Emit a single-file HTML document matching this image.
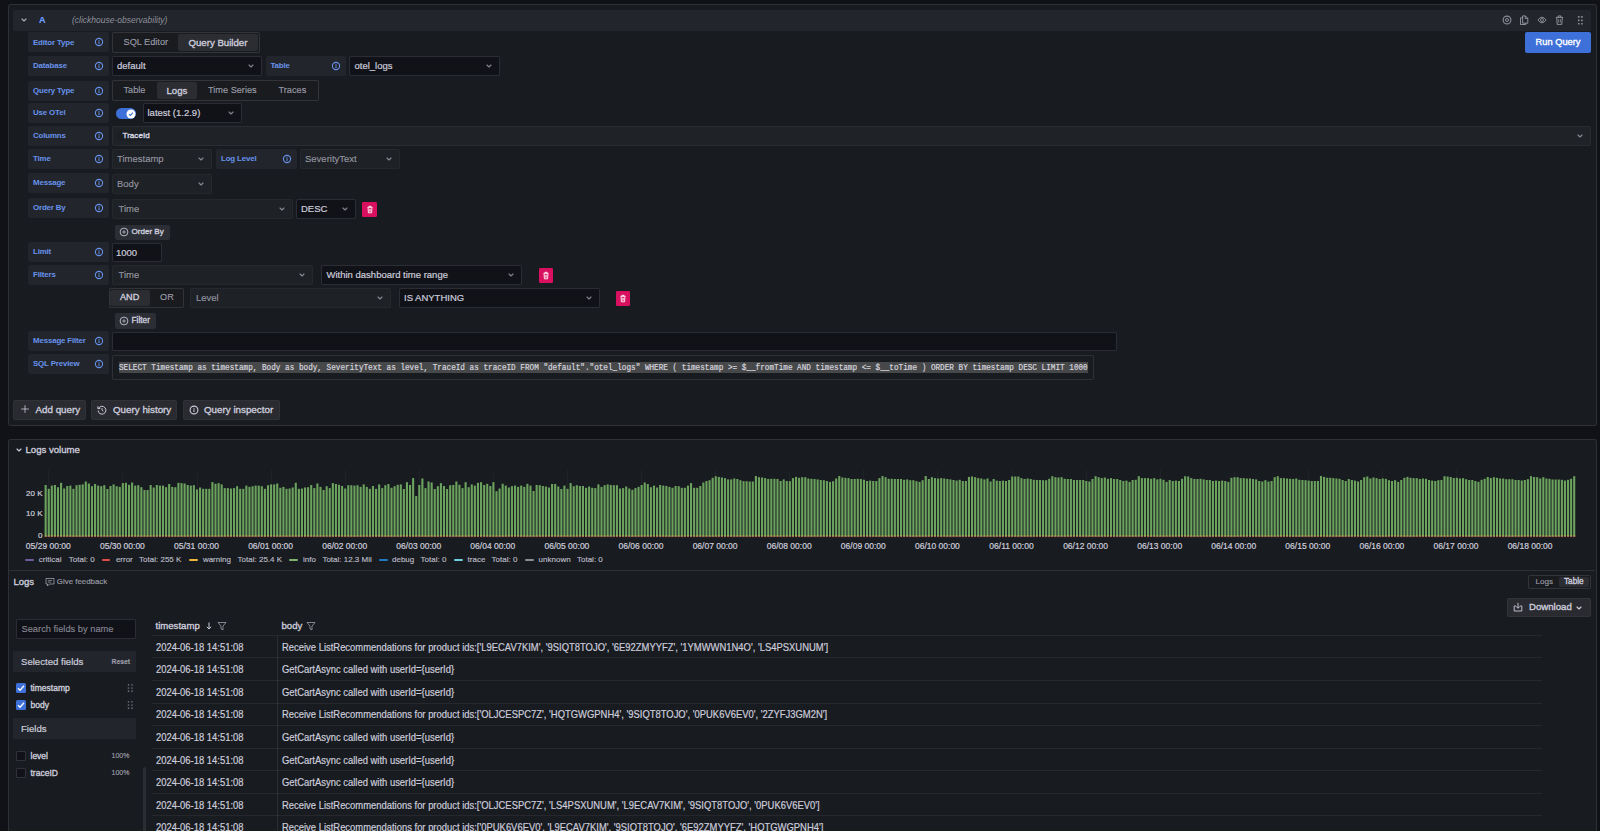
<!DOCTYPE html><html><head><meta charset="utf-8"><style>
html,body{margin:0;padding:0;}
body{width:1600px;height:831px;overflow:hidden;background:#111217;position:relative;font-family:"Liberation Sans",sans-serif;color:#ccccdc;}
.a{position:absolute;}
div.a, span.a{white-space:nowrap;-webkit-text-stroke:0.2px currentColor;}
.sx{transform-origin:0 50%;}
.lbl{color:#6893ec;font-size:7.9px;font-weight:700;letter-spacing:-0.15px;-webkit-text-stroke:0 !important;}
.ns{-webkit-text-stroke:0 !important;}
.val{font-size:9.5px;}
svg.a{overflow:visible;}

</style></head><body>
<div class="a" style="left:8px;top:4px;width:1589px;height:422px;background:#181b1f;border:1px solid rgba(204,204,220,0.12);border-radius:3px;box-sizing:border-box;"></div>
<div class="a" style="left:13px;top:10px;width:1578px;height:20.5px;background:#22252b;border-radius:2px;"></div>
<svg class="a" style="left:19.5px;top:16.5px" width="8" height="6" viewBox="0 0 8 6"><path d="M2 2 L4 4 L6 2" fill="none" stroke="rgba(204,204,220,0.8)" stroke-width="1.15" stroke-linecap="round" stroke-linejoin="round"/></svg>
<div class="a" style="left:39px;top:10px;height:20px;line-height:20px;color:#6e9fff;font-weight:700;font-size:9px">A</div>
<div class="a ns" style="left:72px;top:10px;height:20px;line-height:20px;color:rgba(204,204,220,0.65);font-style:italic;font-size:8.5px">(clickhouse-observability)</div>
<svg class="a" style="left:1501.6px;top:14.7px" width="10" height="10" viewBox="0 0 10 10"><circle cx="5" cy="5" r="3.9" fill="none" stroke="rgba(204,204,220,0.62)" stroke-width="1.1"/><circle cx="5" cy="5" r="1.5" fill="none" stroke="rgba(204,204,220,0.62)" stroke-width="1"/></svg>
<svg class="a" style="left:1519px;top:15px" width="10" height="10" viewBox="0 0 10 10"><path d="M3.6 0.9 H6.4 L8.8 3.3 V8.2 H3.6 Z" fill="none" stroke="rgba(204,204,220,0.62)" stroke-width="1" stroke-linejoin="round"/><path d="M6.2 1 V3.5 H8.7" fill="none" stroke="rgba(204,204,220,0.62)" stroke-width="0.9"/><path d="M3.4 2.8 H1.5 V9.5 H6.8 V8.4" fill="none" stroke="rgba(204,204,220,0.62)" stroke-width="1" stroke-linejoin="round"/></svg>
<svg class="a" style="left:1536.8px;top:14.7px" width="10" height="10" viewBox="0 0 10 10"><path d="M0.9 5 Q5 -0.6 9.1 5 Q5 10.6 0.9 5 Z" fill="none" stroke="rgba(204,204,220,0.62)" stroke-width="1"/><circle cx="5" cy="5" r="1.5" fill="none" stroke="rgba(204,204,220,0.62)" stroke-width="0.9"/></svg>
<svg class="a" style="left:1554.6px;top:14.8px" width="9" height="10" viewBox="0 0 9 10"><path d="M0.9 2.4 H8.1 M3.2 2.2 V0.9 H5.8 V2.2 M1.7 2.6 L2.2 9.4 H6.8 L7.3 2.6" fill="none" stroke="rgba(204,204,220,0.62)" stroke-width="1" stroke-linejoin="round"/><path d="M3.6 4.2 V7.6 M5.4 4.2 V7.6" stroke="rgba(204,204,220,0.62)" stroke-width="0.8"/></svg>
<svg class="a" style="left:1577px;top:15px" width="8" height="10" viewBox="0 0 8 10"><rect x="0.9" y="1.0499999999999998" width="1.7" height="1.7" rx="0.3" fill="rgba(204,204,220,0.62)"/><rect x="0.9" y="4.45" width="1.7" height="1.7" rx="0.3" fill="rgba(204,204,220,0.62)"/><rect x="0.9" y="7.9" width="1.7" height="1.7" rx="0.3" fill="rgba(204,204,220,0.62)"/><rect x="4.050000000000001" y="1.0499999999999998" width="1.7" height="1.7" rx="0.3" fill="rgba(204,204,220,0.62)"/><rect x="4.050000000000001" y="4.45" width="1.7" height="1.7" rx="0.3" fill="rgba(204,204,220,0.62)"/><rect x="4.050000000000001" y="7.9" width="1.7" height="1.7" rx="0.3" fill="rgba(204,204,220,0.62)"/></svg>
<div class="a" style="left:1525px;top:32px;width:66px;height:21px;background:#3d71d9;border-radius:2px;"></div>
<div class="a" style="left:1525px;top:32px;width:66px;height:21px;line-height:21px;text-align:center;color:#fff;font-weight:400;-webkit-text-stroke:0.35px currentColor;font-size:9.3px">Run Query</div>
<div class="a" style="left:28px;top:32px;width:81px;height:20px;background:#22252b;border-radius:2px;"></div><div class="a lbl" style="left:33px;top:33.0px;height:20px;line-height:20px">Editor Type</div><svg class="a" style="left:93.7px;top:37.0px" width="10" height="10" viewBox="0 0 10 10"><circle cx="5" cy="5" r="3.6" fill="none" stroke="#6893ec" stroke-width="1.1"/><rect x="4.5" y="4.3" width="1" height="2.7" fill="#6893ec"/><rect x="4.5" y="2.9" width="1" height="0.9" fill="#6893ec"/></svg>
<div class="a" style="left:28px;top:56px;width:81px;height:20px;background:#22252b;border-radius:2px;"></div><div class="a lbl" style="left:33px;top:56.2px;height:20px;line-height:20px">Database</div><svg class="a" style="left:93.7px;top:61.0px" width="10" height="10" viewBox="0 0 10 10"><circle cx="5" cy="5" r="3.6" fill="none" stroke="#6893ec" stroke-width="1.1"/><rect x="4.5" y="4.3" width="1" height="2.7" fill="#6893ec"/><rect x="4.5" y="2.9" width="1" height="0.9" fill="#6893ec"/></svg>
<div class="a" style="left:28px;top:81px;width:81px;height:20px;background:#22252b;border-radius:2px;"></div><div class="a lbl" style="left:33px;top:81.2px;height:20px;line-height:20px">Query Type</div><svg class="a" style="left:93.7px;top:86.0px" width="10" height="10" viewBox="0 0 10 10"><circle cx="5" cy="5" r="3.6" fill="none" stroke="#6893ec" stroke-width="1.1"/><rect x="4.5" y="4.3" width="1" height="2.7" fill="#6893ec"/><rect x="4.5" y="2.9" width="1" height="0.9" fill="#6893ec"/></svg>
<div class="a" style="left:28px;top:103px;width:81px;height:20px;background:#22252b;border-radius:2px;"></div><div class="a lbl" style="left:33px;top:103.2px;height:20px;line-height:20px">Use OTel</div><svg class="a" style="left:93.7px;top:108.0px" width="10" height="10" viewBox="0 0 10 10"><circle cx="5" cy="5" r="3.6" fill="none" stroke="#6893ec" stroke-width="1.1"/><rect x="4.5" y="4.3" width="1" height="2.7" fill="#6893ec"/><rect x="4.5" y="2.9" width="1" height="0.9" fill="#6893ec"/></svg>
<div class="a" style="left:28px;top:126px;width:81px;height:20px;background:#22252b;border-radius:2px;"></div><div class="a lbl" style="left:33px;top:126.2px;height:20px;line-height:20px">Columns</div><svg class="a" style="left:93.7px;top:131.0px" width="10" height="10" viewBox="0 0 10 10"><circle cx="5" cy="5" r="3.6" fill="none" stroke="#6893ec" stroke-width="1.1"/><rect x="4.5" y="4.3" width="1" height="2.7" fill="#6893ec"/><rect x="4.5" y="2.9" width="1" height="0.9" fill="#6893ec"/></svg>
<div class="a" style="left:28px;top:149px;width:81px;height:20px;background:#22252b;border-radius:2px;"></div><div class="a lbl" style="left:33px;top:149.2px;height:20px;line-height:20px">Time</div><svg class="a" style="left:93.7px;top:154.0px" width="10" height="10" viewBox="0 0 10 10"><circle cx="5" cy="5" r="3.6" fill="none" stroke="#6893ec" stroke-width="1.1"/><rect x="4.5" y="4.3" width="1" height="2.7" fill="#6893ec"/><rect x="4.5" y="2.9" width="1" height="0.9" fill="#6893ec"/></svg>
<div class="a" style="left:28px;top:173px;width:81px;height:20px;background:#22252b;border-radius:2px;"></div><div class="a lbl" style="left:33px;top:173.2px;height:20px;line-height:20px">Message</div><svg class="a" style="left:93.7px;top:178.0px" width="10" height="10" viewBox="0 0 10 10"><circle cx="5" cy="5" r="3.6" fill="none" stroke="#6893ec" stroke-width="1.1"/><rect x="4.5" y="4.3" width="1" height="2.7" fill="#6893ec"/><rect x="4.5" y="2.9" width="1" height="0.9" fill="#6893ec"/></svg>
<div class="a" style="left:28px;top:198px;width:81px;height:20px;background:#22252b;border-radius:2px;"></div><div class="a lbl" style="left:33px;top:198.2px;height:20px;line-height:20px">Order By</div><svg class="a" style="left:93.7px;top:203.0px" width="10" height="10" viewBox="0 0 10 10"><circle cx="5" cy="5" r="3.6" fill="none" stroke="#6893ec" stroke-width="1.1"/><rect x="4.5" y="4.3" width="1" height="2.7" fill="#6893ec"/><rect x="4.5" y="2.9" width="1" height="0.9" fill="#6893ec"/></svg>
<div class="a" style="left:28px;top:242px;width:81px;height:20px;background:#22252b;border-radius:2px;"></div><div class="a lbl" style="left:33px;top:242.2px;height:20px;line-height:20px">Limit</div><svg class="a" style="left:93.7px;top:247.0px" width="10" height="10" viewBox="0 0 10 10"><circle cx="5" cy="5" r="3.6" fill="none" stroke="#6893ec" stroke-width="1.1"/><rect x="4.5" y="4.3" width="1" height="2.7" fill="#6893ec"/><rect x="4.5" y="2.9" width="1" height="0.9" fill="#6893ec"/></svg>
<div class="a" style="left:28px;top:265px;width:81px;height:20px;background:#22252b;border-radius:2px;"></div><div class="a lbl" style="left:33px;top:265.2px;height:20px;line-height:20px">Filters</div><svg class="a" style="left:93.7px;top:270.0px" width="10" height="10" viewBox="0 0 10 10"><circle cx="5" cy="5" r="3.6" fill="none" stroke="#6893ec" stroke-width="1.1"/><rect x="4.5" y="4.3" width="1" height="2.7" fill="#6893ec"/><rect x="4.5" y="2.9" width="1" height="0.9" fill="#6893ec"/></svg>
<div class="a" style="left:28px;top:331px;width:81px;height:20px;background:#22252b;border-radius:2px;"></div><div class="a lbl" style="left:33px;top:331.2px;height:20px;line-height:20px">Message Filter</div><svg class="a" style="left:93.7px;top:336.0px" width="10" height="10" viewBox="0 0 10 10"><circle cx="5" cy="5" r="3.6" fill="none" stroke="#6893ec" stroke-width="1.1"/><rect x="4.5" y="4.3" width="1" height="2.7" fill="#6893ec"/><rect x="4.5" y="2.9" width="1" height="0.9" fill="#6893ec"/></svg>
<div class="a" style="left:28px;top:354px;width:81px;height:20px;background:#22252b;border-radius:2px;"></div><div class="a lbl" style="left:33px;top:354.2px;height:20px;line-height:20px">SQL Preview</div><svg class="a" style="left:93.7px;top:359.0px" width="10" height="10" viewBox="0 0 10 10"><circle cx="5" cy="5" r="3.6" fill="none" stroke="#6893ec" stroke-width="1.1"/><rect x="4.5" y="4.3" width="1" height="2.7" fill="#6893ec"/><rect x="4.5" y="2.9" width="1" height="0.9" fill="#6893ec"/></svg>
<div class="a" style="left:112px;top:32px;width:148px;height:21px;border:1px solid rgba(204,204,220,0.14);border-radius:2px;box-sizing:border-box;background:#191b1f;"></div><div class="a val" style="left:123.5px;top:32.3px;height:21px;line-height:21px;color:rgba(204,204,220,0.65);font-size:9.2px">SQL Editor</div><div class="a" style="left:178px;top:34px;width:80px;height:17px;background:#2b2d32;border-radius:2px;"></div><div class="a val" style="left:188.5px;top:32.3px;height:21px;line-height:21px;color:#ccccdc;font-weight:400;-webkit-text-stroke:0.35px currentColor;font-size:9.65px">Query Builder</div>
<div class="a" style="left:112px;top:55.5px;width:150px;height:20.5px;background:#111217;border:1px solid rgba(204,204,220,0.15);border-radius:2px;box-sizing:border-box;"></div><div class="a val" style="left:117px;top:55.6px;height:20.5px;line-height:20.5px;color:#ccccdc">default</div><svg class="a" style="left:247px;top:62.75px" width="8" height="6" viewBox="0 0 8 6"><path d="M2 2 L4 4 L6 2" fill="none" stroke="rgba(204,204,220,0.6)" stroke-width="1.15" stroke-linecap="round" stroke-linejoin="round"/></svg>
<div class="a" style="left:265.5px;top:55.5px;width:80.5px;height:20.5px;background:#22252b;border-radius:2px;"></div><div class="a lbl" style="left:270.5px;top:55.5px;height:20.5px;line-height:20.5px">Table</div><svg class="a" style="left:330.7px;top:60.75px" width="10" height="10" viewBox="0 0 10 10"><circle cx="5" cy="5" r="3.6" fill="none" stroke="#6893ec" stroke-width="1.1"/><rect x="4.5" y="4.3" width="1" height="2.7" fill="#6893ec"/><rect x="4.5" y="2.9" width="1" height="0.9" fill="#6893ec"/></svg>
<div class="a" style="left:348.5px;top:55.5px;width:151px;height:20.5px;background:#111217;border:1px solid rgba(204,204,220,0.15);border-radius:2px;box-sizing:border-box;"></div><div class="a val" style="left:354.5px;top:55.6px;height:20.5px;line-height:20.5px;color:#ccccdc">otel_logs</div><svg class="a" style="left:485.0px;top:62.75px" width="8" height="6" viewBox="0 0 8 6"><path d="M2 2 L4 4 L6 2" fill="none" stroke="rgba(204,204,220,0.6)" stroke-width="1.15" stroke-linecap="round" stroke-linejoin="round"/></svg>
<div class="a" style="left:112px;top:80px;width:207px;height:21px;border:1px solid rgba(204,204,220,0.14);border-radius:2px;box-sizing:border-box;background:#191b1f;"></div><div class="a val" style="left:123.5px;top:80.3px;height:21px;line-height:21px;color:rgba(204,204,220,0.65);font-size:9.2px">Table</div><div class="a" style="left:156.5px;top:82px;width:40.5px;height:17px;background:#2b2d32;border-radius:2px;"></div><div class="a val" style="left:166.5px;top:80.3px;height:21px;line-height:21px;color:#ccccdc;font-weight:400;-webkit-text-stroke:0.35px currentColor;font-size:9.65px">Logs</div><div class="a val" style="left:208px;top:80.3px;height:21px;line-height:21px;color:rgba(204,204,220,0.65);font-size:9.2px">Time Series</div><div class="a val" style="left:278.5px;top:80.3px;height:21px;line-height:21px;color:rgba(204,204,220,0.65);font-size:9.2px">Traces</div>
<div class="a" style="left:116px;top:108px;width:20px;height:11px;background:#3d71d9;border-radius:6px;"></div>
<svg class="a" style="left:126px;top:108.5px" width="10" height="10" viewBox="0 0 10 10"><circle cx="5" cy="5" r="4.5" fill="#fff"/><path d="M3 5.1 L4.4 6.4 L7 3.7" fill="none" stroke="#3d71d9" stroke-width="1.1"/></svg>
<div class="a" style="left:142.5px;top:103px;width:99px;height:20.3px;background:#111217;border:1px solid rgba(204,204,220,0.15);border-radius:2px;box-sizing:border-box;"></div><div class="a val" style="left:147.5px;top:103.1px;height:20.3px;line-height:20.3px;color:#ccccdc">latest (1.2.9)</div><svg class="a" style="left:227.0px;top:110.15px" width="8" height="6" viewBox="0 0 8 6"><path d="M2 2 L4 4 L6 2" fill="none" stroke="rgba(204,204,220,0.6)" stroke-width="1.15" stroke-linecap="round" stroke-linejoin="round"/></svg>
<div class="a" style="left:112px;top:126px;width:1479px;height:20px;background:#1f2227;border:1px solid rgba(204,204,220,0.06);border-radius:2px;box-sizing:border-box;"></div>
<div class="a" style="left:117px;top:131px;width:34px;height:10px;background:#1c1f24;border-radius:2px;"></div>
<div class="a" style="left:122.5px;top:126px;height:20px;line-height:20px;color:#d8d8e4;font-size:8.1px;font-weight:400;-webkit-text-stroke:0.35px currentColor">TraceId</div>
<svg class="a" style="left:1575.5px;top:133px" width="8" height="6" viewBox="0 0 8 6"><path d="M2 2 L4 4 L6 2" fill="none" stroke="rgba(204,204,220,0.6)" stroke-width="1.15" stroke-linecap="round" stroke-linejoin="round"/></svg>
<div class="a" style="left:112px;top:149px;width:99.5px;height:19.5px;background:#1e2125;border:1px solid rgba(204,204,220,0.045);border-radius:2px;box-sizing:border-box;"></div><div class="a val" style="left:117px;top:149.1px;height:19.5px;line-height:19.5px;color:rgba(204,204,220,0.62)">Timestamp</div><svg class="a" style="left:196.5px;top:155.75px" width="8" height="6" viewBox="0 0 8 6"><path d="M2 2 L4 4 L6 2" fill="none" stroke="rgba(204,204,220,0.6)" stroke-width="1.15" stroke-linecap="round" stroke-linejoin="round"/></svg>
<div class="a" style="left:216px;top:149px;width:81px;height:19.5px;background:#22252b;border-radius:2px;"></div><div class="a lbl" style="left:221px;top:149px;height:19.5px;line-height:19.5px">Log Level</div><svg class="a" style="left:281.7px;top:153.75px" width="10" height="10" viewBox="0 0 10 10"><circle cx="5" cy="5" r="3.6" fill="none" stroke="#6893ec" stroke-width="1.1"/><rect x="4.5" y="4.3" width="1" height="2.7" fill="#6893ec"/><rect x="4.5" y="2.9" width="1" height="0.9" fill="#6893ec"/></svg>
<div class="a" style="left:299.5px;top:149px;width:100.5px;height:19.5px;background:#1e2125;border:1px solid rgba(204,204,220,0.045);border-radius:2px;box-sizing:border-box;"></div><div class="a val" style="left:305.0px;top:149.1px;height:19.5px;line-height:19.5px;color:rgba(204,204,220,0.62)">SeverityText</div><svg class="a" style="left:385.0px;top:155.75px" width="8" height="6" viewBox="0 0 8 6"><path d="M2 2 L4 4 L6 2" fill="none" stroke="rgba(204,204,220,0.6)" stroke-width="1.15" stroke-linecap="round" stroke-linejoin="round"/></svg>
<div class="a" style="left:112px;top:173.5px;width:99.5px;height:20px;background:#1e2125;border:1px solid rgba(204,204,220,0.045);border-radius:2px;box-sizing:border-box;"></div><div class="a val" style="left:117px;top:173.6px;height:20px;line-height:20px;color:rgba(204,204,220,0.62)">Body</div><svg class="a" style="left:196.5px;top:180.5px" width="8" height="6" viewBox="0 0 8 6"><path d="M2 2 L4 4 L6 2" fill="none" stroke="rgba(204,204,220,0.6)" stroke-width="1.15" stroke-linecap="round" stroke-linejoin="round"/></svg>
<div class="a" style="left:112px;top:199px;width:180.5px;height:19.5px;background:#1e2125;border:1px solid rgba(204,204,220,0.045);border-radius:2px;box-sizing:border-box;"></div><div class="a val" style="left:118.5px;top:199.1px;height:19.5px;line-height:19.5px;color:rgba(204,204,220,0.62)">Time</div><svg class="a" style="left:277.5px;top:205.75px" width="8" height="6" viewBox="0 0 8 6"><path d="M2 2 L4 4 L6 2" fill="none" stroke="rgba(204,204,220,0.6)" stroke-width="1.15" stroke-linecap="round" stroke-linejoin="round"/></svg>
<div class="a" style="left:296px;top:199px;width:60px;height:19.5px;background:#111217;border:1px solid rgba(204,204,220,0.15);border-radius:2px;box-sizing:border-box;"></div><div class="a val" style="left:301px;top:199.1px;height:19.5px;line-height:19.5px;color:#ccccdc">DESC</div><svg class="a" style="left:341px;top:205.75px" width="8" height="6" viewBox="0 0 8 6"><path d="M2 2 L4 4 L6 2" fill="none" stroke="rgba(204,204,220,0.6)" stroke-width="1.15" stroke-linecap="round" stroke-linejoin="round"/></svg>
<div class="a" style="left:362px;top:202px;width:15px;height:15px;background:#d8105f;border-radius:1.2px;"></div><svg class="a" style="left:365.5px;top:205.0px" width="8" height="9" viewBox="0 0 8 9"><path d="M1.5 2.3 H6.5 M3 2.3 V1.3 H5 V2.3 M2.1 2.6 L2.4 7.8 H5.6 L5.9 2.6" fill="none" stroke="#fff" stroke-width="0.9" stroke-linejoin="round"/><path d="M3.5 3.8 V6.6 M4.5 3.8 V6.6" stroke="#fff" stroke-width="0.6"/></svg>
<div class="a" style="left:115px;top:225px;width:54.5px;height:14.5px;background:#2b2e34;border-radius:2px;"></div>
<svg class="a" style="left:119.4px;top:226.8px" width="10" height="10" viewBox="0 0 10 10"><circle cx="5" cy="5" r="3.9" fill="none" stroke="#ccccdc" stroke-width="0.85"/><path d="M5 3.2 V6.8 M3.2 5 H6.8" stroke="#ccccdc" stroke-width="0.7"/></svg>
<div class="a" style="left:131.5px;top:225px;height:14.5px;line-height:14.5px;color:#ccccdc;font-size:8.05px;font-weight:400;-webkit-text-stroke:0.35px currentColor">Order By</div>
<div class="a" style="left:112px;top:242.5px;width:49.5px;height:19.5px;background:#111217;border:1px solid rgba(204,204,220,0.15);border-radius:2px;box-sizing:border-box;"></div><div class="a val" style="left:116px;top:242.6px;height:19.5px;line-height:19.5px;color:#ccccdc">1000</div>
<div class="a" style="left:112px;top:265px;width:200.5px;height:19.5px;background:#1e2125;border:1px solid rgba(204,204,220,0.045);border-radius:2px;box-sizing:border-box;"></div><div class="a val" style="left:118.5px;top:265.1px;height:19.5px;line-height:19.5px;color:rgba(204,204,220,0.62)">Time</div><svg class="a" style="left:298.0px;top:271.75px" width="8" height="6" viewBox="0 0 8 6"><path d="M2 2 L4 4 L6 2" fill="none" stroke="rgba(204,204,220,0.6)" stroke-width="1.15" stroke-linecap="round" stroke-linejoin="round"/></svg>
<div class="a" style="left:321px;top:265px;width:200.5px;height:19.5px;background:#111217;border:1px solid rgba(204,204,220,0.15);border-radius:2px;box-sizing:border-box;"></div><div class="a val" style="left:326.5px;top:265.1px;height:19.5px;line-height:19.5px;color:#ccccdc">Within dashboard time range</div><svg class="a" style="left:507.0px;top:271.75px" width="8" height="6" viewBox="0 0 8 6"><path d="M2 2 L4 4 L6 2" fill="none" stroke="rgba(204,204,220,0.6)" stroke-width="1.15" stroke-linecap="round" stroke-linejoin="round"/></svg>
<div class="a" style="left:538.5px;top:268px;width:14.5px;height:14.5px;background:#d8105f;border-radius:1.2px;"></div><svg class="a" style="left:541.75px;top:270.75px" width="8" height="9" viewBox="0 0 8 9"><path d="M1.5 2.3 H6.5 M3 2.3 V1.3 H5 V2.3 M2.1 2.6 L2.4 7.8 H5.6 L5.9 2.6" fill="none" stroke="#fff" stroke-width="0.9" stroke-linejoin="round"/><path d="M3.5 3.8 V6.6 M4.5 3.8 V6.6" stroke="#fff" stroke-width="0.6"/></svg>
<div class="a" style="left:108.5px;top:288px;width:75.5px;height:19.5px;border:1px solid rgba(204,204,220,0.14);border-radius:2px;box-sizing:border-box;background:#191b1f;"></div><div class="a" style="left:110px;top:290px;width:39.5px;height:15.5px;background:#2b2d32;border-radius:2px;"></div><div class="a val" style="left:120px;top:288.3px;height:19.5px;line-height:19.5px;color:#ccccdc;font-weight:400;-webkit-text-stroke:0.35px currentColor;font-size:9.1px">AND</div><div class="a val" style="left:160px;top:288.3px;height:19.5px;line-height:19.5px;color:rgba(204,204,220,0.65);font-size:9.2px">OR</div>
<div class="a" style="left:189.5px;top:288px;width:201px;height:19.5px;background:#1e2125;border:1px solid rgba(204,204,220,0.045);border-radius:2px;box-sizing:border-box;"></div><div class="a val" style="left:196.0px;top:288.1px;height:19.5px;line-height:19.5px;color:rgba(204,204,220,0.62)">Level</div><svg class="a" style="left:375.5px;top:294.75px" width="8" height="6" viewBox="0 0 8 6"><path d="M2 2 L4 4 L6 2" fill="none" stroke="rgba(204,204,220,0.6)" stroke-width="1.15" stroke-linecap="round" stroke-linejoin="round"/></svg>
<div class="a" style="left:399px;top:288px;width:200.5px;height:19.5px;background:#111217;border:1px solid rgba(204,204,220,0.15);border-radius:2px;box-sizing:border-box;"></div><div class="a val" style="left:404px;top:288.1px;height:19.5px;line-height:19.5px;color:#ccccdc">IS ANYTHING</div><svg class="a" style="left:585.0px;top:294.75px" width="8" height="6" viewBox="0 0 8 6"><path d="M2 2 L4 4 L6 2" fill="none" stroke="rgba(204,204,220,0.6)" stroke-width="1.15" stroke-linecap="round" stroke-linejoin="round"/></svg>
<div class="a" style="left:616px;top:290.5px;width:14px;height:15px;background:#d8105f;border-radius:1.2px;"></div><svg class="a" style="left:619.0px;top:293.5px" width="8" height="9" viewBox="0 0 8 9"><path d="M1.5 2.3 H6.5 M3 2.3 V1.3 H5 V2.3 M2.1 2.6 L2.4 7.8 H5.6 L5.9 2.6" fill="none" stroke="#fff" stroke-width="0.9" stroke-linejoin="round"/><path d="M3.5 3.8 V6.6 M4.5 3.8 V6.6" stroke="#fff" stroke-width="0.6"/></svg>
<div class="a" style="left:115px;top:313px;width:40.5px;height:15.5px;background:#2b2e34;border-radius:2px;"></div>
<svg class="a" style="left:119.4px;top:315.5px" width="10" height="10" viewBox="0 0 10 10"><circle cx="5" cy="5" r="3.9" fill="none" stroke="#ccccdc" stroke-width="0.85"/><path d="M5 3.2 V6.8 M3.2 5 H6.8" stroke="#ccccdc" stroke-width="0.7"/></svg>
<div class="a" style="left:131.5px;top:313px;height:15.5px;line-height:15.5px;color:#ccccdc;font-size:8.3px;font-weight:400;-webkit-text-stroke:0.35px currentColor">Filter</div>
<div class="a" style="left:112px;top:331.5px;width:1005px;height:19.5px;background:#111217;border:1px solid rgba(204,204,220,0.15);border-radius:2px;box-sizing:border-box;"></div>
<div class="a" style="left:112px;top:354.5px;width:982px;height:25px;background:#181b1f;border:1px solid rgba(204,204,220,0.12);border-radius:2px;box-sizing:border-box;"></div>
<div class="a" style="left:118.5px;top:361.5px;height:11px;line-height:11px;background:#474849;color:#d5d5df;font-family:'Liberation Mono',monospace;font-size:8.3px;transform:scaleX(0.9265);transform-origin:0 0">SELECT Timestamp as timestamp, Body as body, SeverityText as level, TraceId as traceID FROM "default"."otel_logs" WHERE ( timestamp &gt;= $__fromTime AND timestamp &lt;= $__toTime ) ORDER BY timestamp DESC LIMIT 1000</div>
<div class="a" style="left:13px;top:399.5px;width:73px;height:20.5px;background:#292b30;border:1px solid rgba(204,204,220,0.05);box-sizing:border-box;border-radius:2px;"></div><svg class="a" style="left:19.5px;top:404.3px" width="10" height="10" viewBox="0 0 10 10"><path d="M5 1.2 V8.8 M1.2 5 H8.8" stroke="#ccccdc" stroke-width="0.8"/></svg><div class="a" style="left:35.5px;top:399.5px;height:20.5px;line-height:20.5px;color:#ccccdc;font-size:9.8px;font-weight:400;-webkit-text-stroke:0.35px currentColor">Add query</div>
<div class="a" style="left:90.5px;top:399.5px;width:86.5px;height:20.5px;background:#292b30;border:1px solid rgba(204,204,220,0.05);box-sizing:border-box;border-radius:2px;"></div><svg class="a" style="left:97px;top:405px" width="10" height="10" viewBox="0 0 10 10"><path d="M1.6 3.3 A3.9 3.9 0 1 1 1.1 5.6" fill="none" stroke="#ccccdc" stroke-width="1"/><path d="M0.9 1.3 V3.6 H3.2" fill="none" stroke="#ccccdc" stroke-width="1"/><path d="M5 3 V5.2 L6.4 6.2" fill="none" stroke="#ccccdc" stroke-width="0.9"/></svg><div class="a" style="left:113px;top:399.5px;height:20.5px;line-height:20.5px;color:#ccccdc;font-size:9.8px;font-weight:400;-webkit-text-stroke:0.35px currentColor">Query history</div>
<div class="a" style="left:183px;top:399.5px;width:97px;height:20.5px;background:#292b30;border:1px solid rgba(204,204,220,0.05);box-sizing:border-box;border-radius:2px;"></div><svg class="a" style="left:188.5px;top:405px" width="10" height="10" viewBox="0 0 10 10"><circle cx="5" cy="5" r="3.9" fill="none" stroke="#ccccdc" stroke-width="1.1"/><rect x="4.5" y="4.3" width="1" height="2.7" fill="#ccccdc"/><rect x="4.5" y="2.9" width="1" height="0.9" fill="#ccccdc"/></svg><div class="a" style="left:204px;top:399.5px;height:20.5px;line-height:20.5px;color:#ccccdc;font-size:9.8px;font-weight:400;-webkit-text-stroke:0.35px currentColor">Query inspector</div>
<div class="a" style="left:8px;top:439px;width:1589px;height:400px;background:#181b1f;border:1px solid rgba(204,204,220,0.12);border-radius:3px;box-sizing:border-box;"></div>
<svg class="a" style="left:14.5px;top:447px" width="8" height="6" viewBox="0 0 8 6"><path d="M2 2 L4 4 L6 2" fill="none" stroke="#ccccdc" stroke-width="1.15" stroke-linecap="round" stroke-linejoin="round"/></svg>
<div class="a" style="left:25.5px;top:444px;height:12px;line-height:12px;color:#ccccdc;font-size:9.6px;font-weight:400;-webkit-text-stroke:0.35px currentColor">Logs volume</div>
<div class="a" style="right:1557.5px;top:487.7px;height:12px;line-height:12px;color:#ccccdc;font-size:8px;">20 K</div>
<div class="a" style="right:1557.5px;top:508.20000000000005px;height:12px;line-height:12px;color:#ccccdc;font-size:8px;">10 K</div>
<div class="a" style="right:1557.5px;top:529.8px;height:12px;line-height:12px;color:#ccccdc;font-size:8px;">0</div>
<div class="a" style="left:48.3px;top:470px;width:1px;height:67px;background:rgba(204,204,220,0.045);"></div>
<div class="a" style="left:122.4px;top:470px;width:1px;height:67px;background:rgba(204,204,220,0.045);"></div>
<div class="a" style="left:196.5px;top:470px;width:1px;height:67px;background:rgba(204,204,220,0.045);"></div>
<div class="a" style="left:270.6px;top:470px;width:1px;height:67px;background:rgba(204,204,220,0.045);"></div>
<div class="a" style="left:344.7px;top:470px;width:1px;height:67px;background:rgba(204,204,220,0.045);"></div>
<div class="a" style="left:418.8px;top:470px;width:1px;height:67px;background:rgba(204,204,220,0.045);"></div>
<div class="a" style="left:492.8px;top:470px;width:1px;height:67px;background:rgba(204,204,220,0.045);"></div>
<div class="a" style="left:566.9px;top:470px;width:1px;height:67px;background:rgba(204,204,220,0.045);"></div>
<div class="a" style="left:641.0px;top:470px;width:1px;height:67px;background:rgba(204,204,220,0.045);"></div>
<div class="a" style="left:715.1px;top:470px;width:1px;height:67px;background:rgba(204,204,220,0.045);"></div>
<div class="a" style="left:789.2px;top:470px;width:1px;height:67px;background:rgba(204,204,220,0.045);"></div>
<div class="a" style="left:863.3px;top:470px;width:1px;height:67px;background:rgba(204,204,220,0.045);"></div>
<div class="a" style="left:937.4px;top:470px;width:1px;height:67px;background:rgba(204,204,220,0.045);"></div>
<div class="a" style="left:1011.5px;top:470px;width:1px;height:67px;background:rgba(204,204,220,0.045);"></div>
<div class="a" style="left:1085.6px;top:470px;width:1px;height:67px;background:rgba(204,204,220,0.045);"></div>
<div class="a" style="left:1159.7px;top:470px;width:1px;height:67px;background:rgba(204,204,220,0.045);"></div>
<div class="a" style="left:1233.7px;top:470px;width:1px;height:67px;background:rgba(204,204,220,0.045);"></div>
<div class="a" style="left:1307.8px;top:470px;width:1px;height:67px;background:rgba(204,204,220,0.045);"></div>
<div class="a" style="left:1381.9px;top:470px;width:1px;height:67px;background:rgba(204,204,220,0.045);"></div>
<div class="a" style="left:1456.0px;top:470px;width:1px;height:67px;background:rgba(204,204,220,0.045);"></div>
<div class="a" style="left:1530.1px;top:470px;width:1px;height:67px;background:rgba(204,204,220,0.045);"></div>
<svg class="a" style="left:0;top:0" width="1600" height="600"><rect x="44.60" y="485.0" width="2.1" height="51.6" fill="#6ba25e"/><rect x="44.60" y="535.6" width="2.1" height="0.9" fill="#eab839"/><rect x="44.60" y="536.5" width="2.1" height="0.6" fill="#b04a70"/><rect x="47.69" y="488.8" width="2.1" height="47.9" fill="#6ba25e"/><rect x="47.69" y="535.6" width="2.1" height="0.9" fill="#eab839"/><rect x="47.69" y="536.5" width="2.1" height="0.6" fill="#b04a70"/><rect x="50.78" y="485.6" width="2.1" height="51.0" fill="#6ba25e"/><rect x="50.78" y="535.6" width="2.1" height="0.9" fill="#eab839"/><rect x="50.78" y="536.5" width="2.1" height="0.6" fill="#b04a70"/><rect x="53.86" y="485.0" width="2.1" height="51.6" fill="#6ba25e"/><rect x="53.86" y="535.6" width="2.1" height="0.9" fill="#eab839"/><rect x="53.86" y="536.5" width="2.1" height="0.6" fill="#b04a70"/><rect x="56.95" y="487.2" width="2.1" height="49.4" fill="#6ba25e"/><rect x="56.95" y="535.6" width="2.1" height="0.9" fill="#eab839"/><rect x="56.95" y="536.5" width="2.1" height="0.6" fill="#b04a70"/><rect x="60.04" y="482.8" width="2.1" height="53.9" fill="#6ba25e"/><rect x="60.04" y="535.6" width="2.1" height="0.9" fill="#eab839"/><rect x="60.04" y="536.5" width="2.1" height="0.6" fill="#b04a70"/><rect x="63.13" y="488.5" width="2.1" height="48.1" fill="#6ba25e"/><rect x="63.13" y="535.6" width="2.1" height="0.9" fill="#eab839"/><rect x="63.13" y="536.5" width="2.1" height="0.6" fill="#b04a70"/><rect x="66.22" y="486.0" width="2.1" height="50.6" fill="#6ba25e"/><rect x="66.22" y="535.6" width="2.1" height="0.9" fill="#eab839"/><rect x="66.22" y="536.5" width="2.1" height="0.6" fill="#b04a70"/><rect x="69.30" y="485.6" width="2.1" height="51.0" fill="#6ba25e"/><rect x="69.30" y="535.6" width="2.1" height="0.9" fill="#eab839"/><rect x="69.30" y="536.5" width="2.1" height="0.6" fill="#b04a70"/><rect x="72.39" y="488.8" width="2.1" height="47.9" fill="#6ba25e"/><rect x="72.39" y="535.6" width="2.1" height="0.9" fill="#eab839"/><rect x="72.39" y="536.5" width="2.1" height="0.6" fill="#b04a70"/><rect x="75.48" y="485.2" width="2.1" height="51.4" fill="#6ba25e"/><rect x="75.48" y="535.6" width="2.1" height="0.9" fill="#eab839"/><rect x="75.48" y="536.5" width="2.1" height="0.6" fill="#b04a70"/><rect x="78.57" y="484.8" width="2.1" height="51.9" fill="#6ba25e"/><rect x="78.57" y="535.6" width="2.1" height="0.9" fill="#eab839"/><rect x="78.57" y="536.5" width="2.1" height="0.6" fill="#b04a70"/><rect x="81.66" y="484.4" width="2.1" height="52.2" fill="#6ba25e"/><rect x="81.66" y="535.6" width="2.1" height="0.9" fill="#eab839"/><rect x="81.66" y="536.5" width="2.1" height="0.6" fill="#b04a70"/><rect x="84.74" y="481.5" width="2.1" height="55.1" fill="#6ba25e"/><rect x="84.74" y="535.6" width="2.1" height="0.9" fill="#eab839"/><rect x="84.74" y="536.5" width="2.1" height="0.6" fill="#b04a70"/><rect x="87.83" y="483.5" width="2.1" height="53.1" fill="#6ba25e"/><rect x="87.83" y="535.6" width="2.1" height="0.9" fill="#eab839"/><rect x="87.83" y="536.5" width="2.1" height="0.6" fill="#b04a70"/><rect x="90.92" y="486.2" width="2.1" height="50.4" fill="#6ba25e"/><rect x="90.92" y="535.6" width="2.1" height="0.9" fill="#eab839"/><rect x="90.92" y="536.5" width="2.1" height="0.6" fill="#b04a70"/><rect x="94.01" y="484.0" width="2.1" height="52.6" fill="#6ba25e"/><rect x="94.01" y="535.6" width="2.1" height="0.9" fill="#eab839"/><rect x="94.01" y="536.5" width="2.1" height="0.6" fill="#b04a70"/><rect x="97.10" y="485.6" width="2.1" height="51.0" fill="#6ba25e"/><rect x="97.10" y="535.6" width="2.1" height="0.9" fill="#eab839"/><rect x="97.10" y="536.5" width="2.1" height="0.6" fill="#b04a70"/><rect x="100.18" y="486.2" width="2.1" height="50.4" fill="#6ba25e"/><rect x="100.18" y="535.6" width="2.1" height="0.9" fill="#eab839"/><rect x="100.18" y="536.5" width="2.1" height="0.6" fill="#b04a70"/><rect x="103.27" y="485.2" width="2.1" height="51.4" fill="#6ba25e"/><rect x="103.27" y="535.6" width="2.1" height="0.9" fill="#eab839"/><rect x="103.27" y="536.5" width="2.1" height="0.6" fill="#b04a70"/><rect x="106.36" y="489.0" width="2.1" height="47.6" fill="#6ba25e"/><rect x="106.36" y="535.6" width="2.1" height="0.9" fill="#eab839"/><rect x="106.36" y="536.5" width="2.1" height="0.6" fill="#b04a70"/><rect x="109.45" y="486.0" width="2.1" height="50.6" fill="#6ba25e"/><rect x="109.45" y="535.6" width="2.1" height="0.9" fill="#eab839"/><rect x="109.45" y="536.5" width="2.1" height="0.6" fill="#b04a70"/><rect x="112.54" y="484.4" width="2.1" height="52.2" fill="#6ba25e"/><rect x="112.54" y="535.6" width="2.1" height="0.9" fill="#eab839"/><rect x="112.54" y="536.5" width="2.1" height="0.6" fill="#b04a70"/><rect x="115.62" y="486.2" width="2.1" height="50.4" fill="#6ba25e"/><rect x="115.62" y="535.6" width="2.1" height="0.9" fill="#eab839"/><rect x="115.62" y="536.5" width="2.1" height="0.6" fill="#b04a70"/><rect x="118.71" y="486.9" width="2.1" height="49.7" fill="#6ba25e"/><rect x="118.71" y="535.6" width="2.1" height="0.9" fill="#eab839"/><rect x="118.71" y="536.5" width="2.1" height="0.6" fill="#b04a70"/><rect x="121.80" y="483.1" width="2.1" height="53.5" fill="#6ba25e"/><rect x="121.80" y="535.6" width="2.1" height="0.9" fill="#eab839"/><rect x="121.80" y="536.5" width="2.1" height="0.6" fill="#b04a70"/><rect x="124.89" y="482.8" width="2.1" height="53.9" fill="#6ba25e"/><rect x="124.89" y="535.6" width="2.1" height="0.9" fill="#eab839"/><rect x="124.89" y="536.5" width="2.1" height="0.6" fill="#b04a70"/><rect x="127.98" y="484.8" width="2.1" height="51.9" fill="#6ba25e"/><rect x="127.98" y="535.6" width="2.1" height="0.9" fill="#eab839"/><rect x="127.98" y="536.5" width="2.1" height="0.6" fill="#b04a70"/><rect x="131.06" y="482.5" width="2.1" height="54.1" fill="#6ba25e"/><rect x="131.06" y="535.6" width="2.1" height="0.9" fill="#eab839"/><rect x="131.06" y="536.5" width="2.1" height="0.6" fill="#b04a70"/><rect x="134.15" y="485.6" width="2.1" height="51.0" fill="#6ba25e"/><rect x="134.15" y="535.6" width="2.1" height="0.9" fill="#eab839"/><rect x="134.15" y="536.5" width="2.1" height="0.6" fill="#b04a70"/><rect x="137.24" y="485.2" width="2.1" height="51.4" fill="#6ba25e"/><rect x="137.24" y="535.6" width="2.1" height="0.9" fill="#eab839"/><rect x="137.24" y="536.5" width="2.1" height="0.6" fill="#b04a70"/><rect x="140.33" y="487.2" width="2.1" height="49.4" fill="#6ba25e"/><rect x="140.33" y="535.6" width="2.1" height="0.9" fill="#eab839"/><rect x="140.33" y="536.5" width="2.1" height="0.6" fill="#b04a70"/><rect x="143.42" y="490.0" width="2.1" height="46.6" fill="#6ba25e"/><rect x="143.42" y="535.6" width="2.1" height="0.9" fill="#eab839"/><rect x="143.42" y="536.5" width="2.1" height="0.6" fill="#b04a70"/><rect x="146.50" y="490.0" width="2.1" height="46.6" fill="#6ba25e"/><rect x="146.50" y="535.6" width="2.1" height="0.9" fill="#eab839"/><rect x="146.50" y="536.5" width="2.1" height="0.6" fill="#b04a70"/><rect x="149.59" y="485.0" width="2.1" height="51.6" fill="#6ba25e"/><rect x="149.59" y="535.6" width="2.1" height="0.9" fill="#eab839"/><rect x="149.59" y="536.5" width="2.1" height="0.6" fill="#b04a70"/><rect x="152.68" y="487.5" width="2.1" height="49.1" fill="#6ba25e"/><rect x="152.68" y="535.6" width="2.1" height="0.9" fill="#eab839"/><rect x="152.68" y="536.5" width="2.1" height="0.6" fill="#b04a70"/><rect x="155.77" y="485.0" width="2.1" height="51.6" fill="#6ba25e"/><rect x="155.77" y="535.6" width="2.1" height="0.9" fill="#eab839"/><rect x="155.77" y="536.5" width="2.1" height="0.6" fill="#b04a70"/><rect x="158.86" y="485.6" width="2.1" height="51.0" fill="#6ba25e"/><rect x="158.86" y="535.6" width="2.1" height="0.9" fill="#eab839"/><rect x="158.86" y="536.5" width="2.1" height="0.6" fill="#b04a70"/><rect x="161.94" y="485.6" width="2.1" height="51.0" fill="#6ba25e"/><rect x="161.94" y="535.6" width="2.1" height="0.9" fill="#eab839"/><rect x="161.94" y="536.5" width="2.1" height="0.6" fill="#b04a70"/><rect x="165.03" y="487.2" width="2.1" height="49.4" fill="#6ba25e"/><rect x="165.03" y="535.6" width="2.1" height="0.9" fill="#eab839"/><rect x="165.03" y="536.5" width="2.1" height="0.6" fill="#b04a70"/><rect x="168.12" y="484.0" width="2.1" height="52.6" fill="#6ba25e"/><rect x="168.12" y="535.6" width="2.1" height="0.9" fill="#eab839"/><rect x="168.12" y="536.5" width="2.1" height="0.6" fill="#b04a70"/><rect x="171.21" y="486.9" width="2.1" height="49.7" fill="#6ba25e"/><rect x="171.21" y="535.6" width="2.1" height="0.9" fill="#eab839"/><rect x="171.21" y="536.5" width="2.1" height="0.6" fill="#b04a70"/><rect x="174.30" y="487.2" width="2.1" height="49.4" fill="#6ba25e"/><rect x="174.30" y="535.6" width="2.1" height="0.9" fill="#eab839"/><rect x="174.30" y="536.5" width="2.1" height="0.6" fill="#b04a70"/><rect x="177.38" y="482.8" width="2.1" height="53.9" fill="#6ba25e"/><rect x="177.38" y="535.6" width="2.1" height="0.9" fill="#eab839"/><rect x="177.38" y="536.5" width="2.1" height="0.6" fill="#b04a70"/><rect x="180.47" y="483.1" width="2.1" height="53.5" fill="#6ba25e"/><rect x="180.47" y="535.6" width="2.1" height="0.9" fill="#eab839"/><rect x="180.47" y="536.5" width="2.1" height="0.6" fill="#b04a70"/><rect x="183.56" y="483.5" width="2.1" height="53.1" fill="#6ba25e"/><rect x="183.56" y="535.6" width="2.1" height="0.9" fill="#eab839"/><rect x="183.56" y="536.5" width="2.1" height="0.6" fill="#b04a70"/><rect x="186.65" y="485.0" width="2.1" height="51.6" fill="#6ba25e"/><rect x="186.65" y="535.6" width="2.1" height="0.9" fill="#eab839"/><rect x="186.65" y="536.5" width="2.1" height="0.6" fill="#b04a70"/><rect x="189.74" y="485.6" width="2.1" height="51.0" fill="#6ba25e"/><rect x="189.74" y="535.6" width="2.1" height="0.9" fill="#eab839"/><rect x="189.74" y="536.5" width="2.1" height="0.6" fill="#b04a70"/><rect x="192.82" y="485.2" width="2.1" height="51.4" fill="#6ba25e"/><rect x="192.82" y="535.6" width="2.1" height="0.9" fill="#eab839"/><rect x="192.82" y="536.5" width="2.1" height="0.6" fill="#b04a70"/><rect x="195.91" y="489.4" width="2.1" height="47.2" fill="#6ba25e"/><rect x="195.91" y="535.6" width="2.1" height="0.9" fill="#eab839"/><rect x="195.91" y="536.5" width="2.1" height="0.6" fill="#b04a70"/><rect x="199.00" y="487.5" width="2.1" height="49.1" fill="#6ba25e"/><rect x="199.00" y="535.6" width="2.1" height="0.9" fill="#eab839"/><rect x="199.00" y="536.5" width="2.1" height="0.6" fill="#b04a70"/><rect x="202.09" y="488.8" width="2.1" height="47.9" fill="#6ba25e"/><rect x="202.09" y="535.6" width="2.1" height="0.9" fill="#eab839"/><rect x="202.09" y="536.5" width="2.1" height="0.6" fill="#b04a70"/><rect x="205.18" y="488.8" width="2.1" height="47.9" fill="#6ba25e"/><rect x="205.18" y="535.6" width="2.1" height="0.9" fill="#eab839"/><rect x="205.18" y="536.5" width="2.1" height="0.6" fill="#b04a70"/><rect x="208.26" y="488.8" width="2.1" height="47.9" fill="#6ba25e"/><rect x="208.26" y="535.6" width="2.1" height="0.9" fill="#eab839"/><rect x="208.26" y="536.5" width="2.1" height="0.6" fill="#b04a70"/><rect x="211.35" y="482.1" width="2.1" height="54.5" fill="#6ba25e"/><rect x="211.35" y="535.6" width="2.1" height="0.9" fill="#eab839"/><rect x="211.35" y="536.5" width="2.1" height="0.6" fill="#b04a70"/><rect x="214.44" y="483.8" width="2.1" height="52.9" fill="#6ba25e"/><rect x="214.44" y="535.6" width="2.1" height="0.9" fill="#eab839"/><rect x="214.44" y="536.5" width="2.1" height="0.6" fill="#b04a70"/><rect x="217.53" y="483.1" width="2.1" height="53.5" fill="#6ba25e"/><rect x="217.53" y="535.6" width="2.1" height="0.9" fill="#eab839"/><rect x="217.53" y="536.5" width="2.1" height="0.6" fill="#b04a70"/><rect x="220.62" y="484.4" width="2.1" height="52.2" fill="#6ba25e"/><rect x="220.62" y="535.6" width="2.1" height="0.9" fill="#eab839"/><rect x="220.62" y="536.5" width="2.1" height="0.6" fill="#b04a70"/><rect x="223.70" y="488.1" width="2.1" height="48.5" fill="#6ba25e"/><rect x="223.70" y="535.6" width="2.1" height="0.9" fill="#eab839"/><rect x="223.70" y="536.5" width="2.1" height="0.6" fill="#b04a70"/><rect x="226.79" y="488.1" width="2.1" height="48.5" fill="#6ba25e"/><rect x="226.79" y="535.6" width="2.1" height="0.9" fill="#eab839"/><rect x="226.79" y="536.5" width="2.1" height="0.6" fill="#b04a70"/><rect x="229.88" y="488.5" width="2.1" height="48.1" fill="#6ba25e"/><rect x="229.88" y="535.6" width="2.1" height="0.9" fill="#eab839"/><rect x="229.88" y="536.5" width="2.1" height="0.6" fill="#b04a70"/><rect x="232.97" y="488.1" width="2.1" height="48.5" fill="#6ba25e"/><rect x="232.97" y="535.6" width="2.1" height="0.9" fill="#eab839"/><rect x="232.97" y="536.5" width="2.1" height="0.6" fill="#b04a70"/><rect x="236.06" y="486.2" width="2.1" height="50.4" fill="#6ba25e"/><rect x="236.06" y="535.6" width="2.1" height="0.9" fill="#eab839"/><rect x="236.06" y="536.5" width="2.1" height="0.6" fill="#b04a70"/><rect x="239.14" y="488.8" width="2.1" height="47.9" fill="#6ba25e"/><rect x="239.14" y="535.6" width="2.1" height="0.9" fill="#eab839"/><rect x="239.14" y="536.5" width="2.1" height="0.6" fill="#b04a70"/><rect x="242.23" y="488.8" width="2.1" height="47.9" fill="#6ba25e"/><rect x="242.23" y="535.6" width="2.1" height="0.9" fill="#eab839"/><rect x="242.23" y="536.5" width="2.1" height="0.6" fill="#b04a70"/><rect x="245.32" y="485.6" width="2.1" height="51.0" fill="#6ba25e"/><rect x="245.32" y="535.6" width="2.1" height="0.9" fill="#eab839"/><rect x="245.32" y="536.5" width="2.1" height="0.6" fill="#b04a70"/><rect x="248.41" y="486.9" width="2.1" height="49.7" fill="#6ba25e"/><rect x="248.41" y="535.6" width="2.1" height="0.9" fill="#eab839"/><rect x="248.41" y="536.5" width="2.1" height="0.6" fill="#b04a70"/><rect x="251.50" y="486.2" width="2.1" height="50.4" fill="#6ba25e"/><rect x="251.50" y="535.6" width="2.1" height="0.9" fill="#eab839"/><rect x="251.50" y="536.5" width="2.1" height="0.6" fill="#b04a70"/><rect x="254.58" y="485.6" width="2.1" height="51.0" fill="#6ba25e"/><rect x="254.58" y="535.6" width="2.1" height="0.9" fill="#eab839"/><rect x="254.58" y="536.5" width="2.1" height="0.6" fill="#b04a70"/><rect x="257.67" y="485.6" width="2.1" height="51.0" fill="#6ba25e"/><rect x="257.67" y="535.6" width="2.1" height="0.9" fill="#eab839"/><rect x="257.67" y="536.5" width="2.1" height="0.6" fill="#b04a70"/><rect x="260.76" y="486.2" width="2.1" height="50.4" fill="#6ba25e"/><rect x="260.76" y="535.6" width="2.1" height="0.9" fill="#eab839"/><rect x="260.76" y="536.5" width="2.1" height="0.6" fill="#b04a70"/><rect x="263.85" y="488.8" width="2.1" height="47.9" fill="#6ba25e"/><rect x="263.85" y="535.6" width="2.1" height="0.9" fill="#eab839"/><rect x="263.85" y="536.5" width="2.1" height="0.6" fill="#b04a70"/><rect x="266.94" y="485.2" width="2.1" height="51.4" fill="#6ba25e"/><rect x="266.94" y="535.6" width="2.1" height="0.9" fill="#eab839"/><rect x="266.94" y="536.5" width="2.1" height="0.6" fill="#b04a70"/><rect x="270.02" y="484.4" width="2.1" height="52.2" fill="#6ba25e"/><rect x="270.02" y="535.6" width="2.1" height="0.9" fill="#eab839"/><rect x="270.02" y="536.5" width="2.1" height="0.6" fill="#b04a70"/><rect x="273.11" y="484.4" width="2.1" height="52.2" fill="#6ba25e"/><rect x="273.11" y="535.6" width="2.1" height="0.9" fill="#eab839"/><rect x="273.11" y="536.5" width="2.1" height="0.6" fill="#b04a70"/><rect x="276.20" y="483.5" width="2.1" height="53.1" fill="#6ba25e"/><rect x="276.20" y="535.6" width="2.1" height="0.9" fill="#eab839"/><rect x="276.20" y="536.5" width="2.1" height="0.6" fill="#b04a70"/><rect x="279.29" y="487.8" width="2.1" height="48.9" fill="#6ba25e"/><rect x="279.29" y="535.6" width="2.1" height="0.9" fill="#eab839"/><rect x="279.29" y="536.5" width="2.1" height="0.6" fill="#b04a70"/><rect x="282.38" y="486.9" width="2.1" height="49.7" fill="#6ba25e"/><rect x="282.38" y="535.6" width="2.1" height="0.9" fill="#eab839"/><rect x="282.38" y="536.5" width="2.1" height="0.6" fill="#b04a70"/><rect x="285.46" y="488.8" width="2.1" height="47.9" fill="#6ba25e"/><rect x="285.46" y="535.6" width="2.1" height="0.9" fill="#eab839"/><rect x="285.46" y="536.5" width="2.1" height="0.6" fill="#b04a70"/><rect x="288.55" y="488.5" width="2.1" height="48.1" fill="#6ba25e"/><rect x="288.55" y="535.6" width="2.1" height="0.9" fill="#eab839"/><rect x="288.55" y="536.5" width="2.1" height="0.6" fill="#b04a70"/><rect x="291.64" y="487.5" width="2.1" height="49.1" fill="#6ba25e"/><rect x="291.64" y="535.6" width="2.1" height="0.9" fill="#eab839"/><rect x="291.64" y="536.5" width="2.1" height="0.6" fill="#b04a70"/><rect x="294.73" y="482.8" width="2.1" height="53.9" fill="#6ba25e"/><rect x="294.73" y="535.6" width="2.1" height="0.9" fill="#eab839"/><rect x="294.73" y="536.5" width="2.1" height="0.6" fill="#b04a70"/><rect x="297.82" y="488.8" width="2.1" height="47.9" fill="#6ba25e"/><rect x="297.82" y="535.6" width="2.1" height="0.9" fill="#eab839"/><rect x="297.82" y="536.5" width="2.1" height="0.6" fill="#b04a70"/><rect x="300.90" y="488.5" width="2.1" height="48.1" fill="#6ba25e"/><rect x="300.90" y="535.6" width="2.1" height="0.9" fill="#eab839"/><rect x="300.90" y="536.5" width="2.1" height="0.6" fill="#b04a70"/><rect x="303.99" y="487.5" width="2.1" height="49.1" fill="#6ba25e"/><rect x="303.99" y="535.6" width="2.1" height="0.9" fill="#eab839"/><rect x="303.99" y="536.5" width="2.1" height="0.6" fill="#b04a70"/><rect x="307.08" y="487.2" width="2.1" height="49.4" fill="#6ba25e"/><rect x="307.08" y="535.6" width="2.1" height="0.9" fill="#eab839"/><rect x="307.08" y="536.5" width="2.1" height="0.6" fill="#b04a70"/><rect x="310.17" y="485.0" width="2.1" height="51.6" fill="#6ba25e"/><rect x="310.17" y="535.6" width="2.1" height="0.9" fill="#eab839"/><rect x="310.17" y="536.5" width="2.1" height="0.6" fill="#b04a70"/><rect x="313.26" y="488.1" width="2.1" height="48.5" fill="#6ba25e"/><rect x="313.26" y="535.6" width="2.1" height="0.9" fill="#eab839"/><rect x="313.26" y="536.5" width="2.1" height="0.6" fill="#b04a70"/><rect x="316.34" y="483.5" width="2.1" height="53.1" fill="#6ba25e"/><rect x="316.34" y="535.6" width="2.1" height="0.9" fill="#eab839"/><rect x="316.34" y="536.5" width="2.1" height="0.6" fill="#b04a70"/><rect x="319.43" y="486.9" width="2.1" height="49.7" fill="#6ba25e"/><rect x="319.43" y="535.6" width="2.1" height="0.9" fill="#eab839"/><rect x="319.43" y="536.5" width="2.1" height="0.6" fill="#b04a70"/><rect x="322.52" y="490.0" width="2.1" height="46.6" fill="#6ba25e"/><rect x="322.52" y="535.6" width="2.1" height="0.9" fill="#eab839"/><rect x="322.52" y="536.5" width="2.1" height="0.6" fill="#b04a70"/><rect x="325.61" y="486.2" width="2.1" height="50.4" fill="#6ba25e"/><rect x="325.61" y="535.6" width="2.1" height="0.9" fill="#eab839"/><rect x="325.61" y="536.5" width="2.1" height="0.6" fill="#b04a70"/><rect x="328.70" y="488.1" width="2.1" height="48.5" fill="#6ba25e"/><rect x="328.70" y="535.6" width="2.1" height="0.9" fill="#eab839"/><rect x="328.70" y="536.5" width="2.1" height="0.6" fill="#b04a70"/><rect x="331.78" y="483.1" width="2.1" height="53.5" fill="#6ba25e"/><rect x="331.78" y="535.6" width="2.1" height="0.9" fill="#eab839"/><rect x="331.78" y="536.5" width="2.1" height="0.6" fill="#b04a70"/><rect x="334.87" y="484.0" width="2.1" height="52.6" fill="#6ba25e"/><rect x="334.87" y="535.6" width="2.1" height="0.9" fill="#eab839"/><rect x="334.87" y="536.5" width="2.1" height="0.6" fill="#b04a70"/><rect x="337.96" y="484.8" width="2.1" height="51.9" fill="#6ba25e"/><rect x="337.96" y="535.6" width="2.1" height="0.9" fill="#eab839"/><rect x="337.96" y="536.5" width="2.1" height="0.6" fill="#b04a70"/><rect x="341.05" y="486.0" width="2.1" height="50.6" fill="#6ba25e"/><rect x="341.05" y="535.6" width="2.1" height="0.9" fill="#eab839"/><rect x="341.05" y="536.5" width="2.1" height="0.6" fill="#b04a70"/><rect x="344.14" y="488.5" width="2.1" height="48.1" fill="#6ba25e"/><rect x="344.14" y="535.6" width="2.1" height="0.9" fill="#eab839"/><rect x="344.14" y="536.5" width="2.1" height="0.6" fill="#b04a70"/><rect x="347.22" y="485.2" width="2.1" height="51.4" fill="#6ba25e"/><rect x="347.22" y="535.6" width="2.1" height="0.9" fill="#eab839"/><rect x="347.22" y="536.5" width="2.1" height="0.6" fill="#b04a70"/><rect x="350.31" y="485.2" width="2.1" height="51.4" fill="#6ba25e"/><rect x="350.31" y="535.6" width="2.1" height="0.9" fill="#eab839"/><rect x="350.31" y="536.5" width="2.1" height="0.6" fill="#b04a70"/><rect x="353.40" y="485.6" width="2.1" height="51.0" fill="#6ba25e"/><rect x="353.40" y="535.6" width="2.1" height="0.9" fill="#eab839"/><rect x="353.40" y="536.5" width="2.1" height="0.6" fill="#b04a70"/><rect x="356.49" y="485.2" width="2.1" height="51.4" fill="#6ba25e"/><rect x="356.49" y="535.6" width="2.1" height="0.9" fill="#eab839"/><rect x="356.49" y="536.5" width="2.1" height="0.6" fill="#b04a70"/><rect x="359.58" y="486.9" width="2.1" height="49.7" fill="#6ba25e"/><rect x="359.58" y="535.6" width="2.1" height="0.9" fill="#eab839"/><rect x="359.58" y="536.5" width="2.1" height="0.6" fill="#b04a70"/><rect x="362.66" y="484.4" width="2.1" height="52.2" fill="#6ba25e"/><rect x="362.66" y="535.6" width="2.1" height="0.9" fill="#eab839"/><rect x="362.66" y="536.5" width="2.1" height="0.6" fill="#b04a70"/><rect x="365.75" y="486.9" width="2.1" height="49.7" fill="#6ba25e"/><rect x="365.75" y="535.6" width="2.1" height="0.9" fill="#eab839"/><rect x="365.75" y="536.5" width="2.1" height="0.6" fill="#b04a70"/><rect x="368.84" y="488.8" width="2.1" height="47.9" fill="#6ba25e"/><rect x="368.84" y="535.6" width="2.1" height="0.9" fill="#eab839"/><rect x="368.84" y="536.5" width="2.1" height="0.6" fill="#b04a70"/><rect x="371.93" y="486.0" width="2.1" height="50.6" fill="#6ba25e"/><rect x="371.93" y="535.6" width="2.1" height="0.9" fill="#eab839"/><rect x="371.93" y="536.5" width="2.1" height="0.6" fill="#b04a70"/><rect x="375.02" y="488.8" width="2.1" height="47.9" fill="#6ba25e"/><rect x="375.02" y="535.6" width="2.1" height="0.9" fill="#eab839"/><rect x="375.02" y="536.5" width="2.1" height="0.6" fill="#b04a70"/><rect x="378.10" y="484.4" width="2.1" height="52.2" fill="#6ba25e"/><rect x="378.10" y="535.6" width="2.1" height="0.9" fill="#eab839"/><rect x="378.10" y="536.5" width="2.1" height="0.6" fill="#b04a70"/><rect x="381.19" y="488.1" width="2.1" height="48.5" fill="#6ba25e"/><rect x="381.19" y="535.6" width="2.1" height="0.9" fill="#eab839"/><rect x="381.19" y="536.5" width="2.1" height="0.6" fill="#b04a70"/><rect x="384.28" y="485.2" width="2.1" height="51.4" fill="#6ba25e"/><rect x="384.28" y="535.6" width="2.1" height="0.9" fill="#eab839"/><rect x="384.28" y="536.5" width="2.1" height="0.6" fill="#b04a70"/><rect x="387.37" y="484.0" width="2.1" height="52.6" fill="#6ba25e"/><rect x="387.37" y="535.6" width="2.1" height="0.9" fill="#eab839"/><rect x="387.37" y="536.5" width="2.1" height="0.6" fill="#b04a70"/><rect x="390.46" y="487.8" width="2.1" height="48.9" fill="#6ba25e"/><rect x="390.46" y="535.6" width="2.1" height="0.9" fill="#eab839"/><rect x="390.46" y="536.5" width="2.1" height="0.6" fill="#b04a70"/><rect x="393.54" y="486.2" width="2.1" height="50.4" fill="#6ba25e"/><rect x="393.54" y="535.6" width="2.1" height="0.9" fill="#eab839"/><rect x="393.54" y="536.5" width="2.1" height="0.6" fill="#b04a70"/><rect x="396.63" y="484.8" width="2.1" height="51.9" fill="#6ba25e"/><rect x="396.63" y="535.6" width="2.1" height="0.9" fill="#eab839"/><rect x="396.63" y="536.5" width="2.1" height="0.6" fill="#b04a70"/><rect x="399.72" y="484.4" width="2.1" height="52.2" fill="#6ba25e"/><rect x="399.72" y="535.6" width="2.1" height="0.9" fill="#eab839"/><rect x="399.72" y="536.5" width="2.1" height="0.6" fill="#b04a70"/><rect x="402.81" y="489.0" width="2.1" height="47.6" fill="#6ba25e"/><rect x="402.81" y="535.6" width="2.1" height="0.9" fill="#eab839"/><rect x="402.81" y="536.5" width="2.1" height="0.6" fill="#b04a70"/><rect x="405.90" y="482.2" width="2.1" height="54.4" fill="#6ba25e"/><rect x="405.90" y="535.6" width="2.1" height="0.9" fill="#eab839"/><rect x="405.90" y="536.5" width="2.1" height="0.6" fill="#b04a70"/><rect x="408.98" y="485.0" width="2.1" height="51.6" fill="#6ba25e"/><rect x="408.98" y="535.6" width="2.1" height="0.9" fill="#eab839"/><rect x="408.98" y="536.5" width="2.1" height="0.6" fill="#b04a70"/><rect x="412.07" y="478.1" width="2.1" height="58.5" fill="#6ba25e"/><rect x="412.07" y="535.6" width="2.1" height="0.9" fill="#eab839"/><rect x="412.07" y="536.5" width="2.1" height="0.6" fill="#b04a70"/><rect x="415.16" y="496.0" width="2.1" height="40.6" fill="#6ba25e"/><rect x="415.16" y="535.6" width="2.1" height="0.9" fill="#eab839"/><rect x="415.16" y="536.5" width="2.1" height="0.6" fill="#b04a70"/><rect x="418.25" y="485.0" width="2.1" height="51.6" fill="#6ba25e"/><rect x="418.25" y="535.6" width="2.1" height="0.9" fill="#eab839"/><rect x="418.25" y="536.5" width="2.1" height="0.6" fill="#b04a70"/><rect x="421.34" y="478.5" width="2.1" height="58.1" fill="#6ba25e"/><rect x="421.34" y="535.6" width="2.1" height="0.9" fill="#eab839"/><rect x="421.34" y="536.5" width="2.1" height="0.6" fill="#b04a70"/><rect x="424.42" y="488.1" width="2.1" height="48.5" fill="#6ba25e"/><rect x="424.42" y="535.6" width="2.1" height="0.9" fill="#eab839"/><rect x="424.42" y="536.5" width="2.1" height="0.6" fill="#b04a70"/><rect x="427.51" y="481.5" width="2.1" height="55.1" fill="#6ba25e"/><rect x="427.51" y="535.6" width="2.1" height="0.9" fill="#eab839"/><rect x="427.51" y="536.5" width="2.1" height="0.6" fill="#b04a70"/><rect x="430.60" y="482.5" width="2.1" height="54.1" fill="#6ba25e"/><rect x="430.60" y="535.6" width="2.1" height="0.9" fill="#eab839"/><rect x="430.60" y="536.5" width="2.1" height="0.6" fill="#b04a70"/><rect x="433.69" y="489.0" width="2.1" height="47.6" fill="#6ba25e"/><rect x="433.69" y="535.6" width="2.1" height="0.9" fill="#eab839"/><rect x="433.69" y="536.5" width="2.1" height="0.6" fill="#b04a70"/><rect x="436.78" y="486.2" width="2.1" height="50.4" fill="#6ba25e"/><rect x="436.78" y="535.6" width="2.1" height="0.9" fill="#eab839"/><rect x="436.78" y="536.5" width="2.1" height="0.6" fill="#b04a70"/><rect x="439.86" y="483.1" width="2.1" height="53.5" fill="#6ba25e"/><rect x="439.86" y="535.6" width="2.1" height="0.9" fill="#eab839"/><rect x="439.86" y="536.5" width="2.1" height="0.6" fill="#b04a70"/><rect x="442.95" y="486.0" width="2.1" height="50.6" fill="#6ba25e"/><rect x="442.95" y="535.6" width="2.1" height="0.9" fill="#eab839"/><rect x="442.95" y="536.5" width="2.1" height="0.6" fill="#b04a70"/><rect x="446.04" y="489.0" width="2.1" height="47.6" fill="#6ba25e"/><rect x="446.04" y="535.6" width="2.1" height="0.9" fill="#eab839"/><rect x="446.04" y="536.5" width="2.1" height="0.6" fill="#b04a70"/><rect x="449.13" y="485.2" width="2.1" height="51.4" fill="#6ba25e"/><rect x="449.13" y="535.6" width="2.1" height="0.9" fill="#eab839"/><rect x="449.13" y="536.5" width="2.1" height="0.6" fill="#b04a70"/><rect x="452.22" y="485.0" width="2.1" height="51.6" fill="#6ba25e"/><rect x="452.22" y="535.6" width="2.1" height="0.9" fill="#eab839"/><rect x="452.22" y="536.5" width="2.1" height="0.6" fill="#b04a70"/><rect x="455.30" y="481.5" width="2.1" height="55.1" fill="#6ba25e"/><rect x="455.30" y="535.6" width="2.1" height="0.9" fill="#eab839"/><rect x="455.30" y="536.5" width="2.1" height="0.6" fill="#b04a70"/><rect x="458.39" y="484.8" width="2.1" height="51.9" fill="#6ba25e"/><rect x="458.39" y="535.6" width="2.1" height="0.9" fill="#eab839"/><rect x="458.39" y="536.5" width="2.1" height="0.6" fill="#b04a70"/><rect x="461.48" y="488.1" width="2.1" height="48.5" fill="#6ba25e"/><rect x="461.48" y="535.6" width="2.1" height="0.9" fill="#eab839"/><rect x="461.48" y="536.5" width="2.1" height="0.6" fill="#b04a70"/><rect x="464.57" y="482.2" width="2.1" height="54.4" fill="#6ba25e"/><rect x="464.57" y="535.6" width="2.1" height="0.9" fill="#eab839"/><rect x="464.57" y="536.5" width="2.1" height="0.6" fill="#b04a70"/><rect x="467.66" y="487.2" width="2.1" height="49.4" fill="#6ba25e"/><rect x="467.66" y="535.6" width="2.1" height="0.9" fill="#eab839"/><rect x="467.66" y="536.5" width="2.1" height="0.6" fill="#b04a70"/><rect x="470.74" y="484.4" width="2.1" height="52.2" fill="#6ba25e"/><rect x="470.74" y="535.6" width="2.1" height="0.9" fill="#eab839"/><rect x="470.74" y="536.5" width="2.1" height="0.6" fill="#b04a70"/><rect x="473.83" y="485.6" width="2.1" height="51.0" fill="#6ba25e"/><rect x="473.83" y="535.6" width="2.1" height="0.9" fill="#eab839"/><rect x="473.83" y="536.5" width="2.1" height="0.6" fill="#b04a70"/><rect x="476.92" y="482.8" width="2.1" height="53.9" fill="#6ba25e"/><rect x="476.92" y="535.6" width="2.1" height="0.9" fill="#eab839"/><rect x="476.92" y="536.5" width="2.1" height="0.6" fill="#b04a70"/><rect x="480.01" y="482.2" width="2.1" height="54.4" fill="#6ba25e"/><rect x="480.01" y="535.6" width="2.1" height="0.9" fill="#eab839"/><rect x="480.01" y="536.5" width="2.1" height="0.6" fill="#b04a70"/><rect x="483.10" y="485.0" width="2.1" height="51.6" fill="#6ba25e"/><rect x="483.10" y="535.6" width="2.1" height="0.9" fill="#eab839"/><rect x="483.10" y="536.5" width="2.1" height="0.6" fill="#b04a70"/><rect x="486.18" y="483.8" width="2.1" height="52.9" fill="#6ba25e"/><rect x="486.18" y="535.6" width="2.1" height="0.9" fill="#eab839"/><rect x="486.18" y="536.5" width="2.1" height="0.6" fill="#b04a70"/><rect x="489.27" y="486.0" width="2.1" height="50.6" fill="#6ba25e"/><rect x="489.27" y="535.6" width="2.1" height="0.9" fill="#eab839"/><rect x="489.27" y="536.5" width="2.1" height="0.6" fill="#b04a70"/><rect x="492.36" y="482.2" width="2.1" height="54.4" fill="#6ba25e"/><rect x="492.36" y="535.6" width="2.1" height="0.9" fill="#eab839"/><rect x="492.36" y="536.5" width="2.1" height="0.6" fill="#b04a70"/><rect x="495.45" y="491.2" width="2.1" height="45.4" fill="#6ba25e"/><rect x="495.45" y="535.6" width="2.1" height="0.9" fill="#eab839"/><rect x="495.45" y="536.5" width="2.1" height="0.6" fill="#b04a70"/><rect x="498.54" y="488.5" width="2.1" height="48.1" fill="#6ba25e"/><rect x="498.54" y="535.6" width="2.1" height="0.9" fill="#eab839"/><rect x="498.54" y="536.5" width="2.1" height="0.6" fill="#b04a70"/><rect x="501.62" y="483.8" width="2.1" height="52.9" fill="#6ba25e"/><rect x="501.62" y="535.6" width="2.1" height="0.9" fill="#eab839"/><rect x="501.62" y="536.5" width="2.1" height="0.6" fill="#b04a70"/><rect x="504.71" y="485.6" width="2.1" height="51.0" fill="#6ba25e"/><rect x="504.71" y="535.6" width="2.1" height="0.9" fill="#eab839"/><rect x="504.71" y="536.5" width="2.1" height="0.6" fill="#b04a70"/><rect x="507.80" y="487.5" width="2.1" height="49.1" fill="#6ba25e"/><rect x="507.80" y="535.6" width="2.1" height="0.9" fill="#eab839"/><rect x="507.80" y="536.5" width="2.1" height="0.6" fill="#b04a70"/><rect x="510.89" y="486.2" width="2.1" height="50.4" fill="#6ba25e"/><rect x="510.89" y="535.6" width="2.1" height="0.9" fill="#eab839"/><rect x="510.89" y="536.5" width="2.1" height="0.6" fill="#b04a70"/><rect x="513.98" y="485.6" width="2.1" height="51.0" fill="#6ba25e"/><rect x="513.98" y="535.6" width="2.1" height="0.9" fill="#eab839"/><rect x="513.98" y="536.5" width="2.1" height="0.6" fill="#b04a70"/><rect x="517.06" y="486.9" width="2.1" height="49.7" fill="#6ba25e"/><rect x="517.06" y="535.6" width="2.1" height="0.9" fill="#eab839"/><rect x="517.06" y="536.5" width="2.1" height="0.6" fill="#b04a70"/><rect x="520.15" y="485.6" width="2.1" height="51.0" fill="#6ba25e"/><rect x="520.15" y="535.6" width="2.1" height="0.9" fill="#eab839"/><rect x="520.15" y="536.5" width="2.1" height="0.6" fill="#b04a70"/><rect x="523.24" y="486.9" width="2.1" height="49.7" fill="#6ba25e"/><rect x="523.24" y="535.6" width="2.1" height="0.9" fill="#eab839"/><rect x="523.24" y="536.5" width="2.1" height="0.6" fill="#b04a70"/><rect x="526.33" y="483.8" width="2.1" height="52.9" fill="#6ba25e"/><rect x="526.33" y="535.6" width="2.1" height="0.9" fill="#eab839"/><rect x="526.33" y="536.5" width="2.1" height="0.6" fill="#b04a70"/><rect x="529.42" y="485.6" width="2.1" height="51.0" fill="#6ba25e"/><rect x="529.42" y="535.6" width="2.1" height="0.9" fill="#eab839"/><rect x="529.42" y="536.5" width="2.1" height="0.6" fill="#b04a70"/><rect x="532.50" y="491.0" width="2.1" height="45.6" fill="#6ba25e"/><rect x="532.50" y="535.6" width="2.1" height="0.9" fill="#eab839"/><rect x="532.50" y="536.5" width="2.1" height="0.6" fill="#b04a70"/><rect x="535.59" y="485.0" width="2.1" height="51.6" fill="#6ba25e"/><rect x="535.59" y="535.6" width="2.1" height="0.9" fill="#eab839"/><rect x="535.59" y="536.5" width="2.1" height="0.6" fill="#b04a70"/><rect x="538.68" y="485.2" width="2.1" height="51.4" fill="#6ba25e"/><rect x="538.68" y="535.6" width="2.1" height="0.9" fill="#eab839"/><rect x="538.68" y="536.5" width="2.1" height="0.6" fill="#b04a70"/><rect x="541.77" y="486.0" width="2.1" height="50.6" fill="#6ba25e"/><rect x="541.77" y="535.6" width="2.1" height="0.9" fill="#eab839"/><rect x="541.77" y="536.5" width="2.1" height="0.6" fill="#b04a70"/><rect x="544.86" y="486.5" width="2.1" height="50.1" fill="#6ba25e"/><rect x="544.86" y="535.6" width="2.1" height="0.9" fill="#eab839"/><rect x="544.86" y="536.5" width="2.1" height="0.6" fill="#b04a70"/><rect x="547.94" y="487.5" width="2.1" height="49.1" fill="#6ba25e"/><rect x="547.94" y="535.6" width="2.1" height="0.9" fill="#eab839"/><rect x="547.94" y="536.5" width="2.1" height="0.6" fill="#b04a70"/><rect x="551.03" y="484.0" width="2.1" height="52.6" fill="#6ba25e"/><rect x="551.03" y="535.6" width="2.1" height="0.9" fill="#eab839"/><rect x="551.03" y="536.5" width="2.1" height="0.6" fill="#b04a70"/><rect x="554.12" y="484.0" width="2.1" height="52.6" fill="#6ba25e"/><rect x="554.12" y="535.6" width="2.1" height="0.9" fill="#eab839"/><rect x="554.12" y="536.5" width="2.1" height="0.6" fill="#b04a70"/><rect x="557.21" y="486.5" width="2.1" height="50.1" fill="#6ba25e"/><rect x="557.21" y="535.6" width="2.1" height="0.9" fill="#eab839"/><rect x="557.21" y="536.5" width="2.1" height="0.6" fill="#b04a70"/><rect x="560.30" y="489.0" width="2.1" height="47.6" fill="#6ba25e"/><rect x="560.30" y="535.6" width="2.1" height="0.9" fill="#eab839"/><rect x="560.30" y="536.5" width="2.1" height="0.6" fill="#b04a70"/><rect x="563.38" y="485.6" width="2.1" height="51.0" fill="#6ba25e"/><rect x="563.38" y="535.6" width="2.1" height="0.9" fill="#eab839"/><rect x="563.38" y="536.5" width="2.1" height="0.6" fill="#b04a70"/><rect x="566.47" y="488.8" width="2.1" height="47.9" fill="#6ba25e"/><rect x="566.47" y="535.6" width="2.1" height="0.9" fill="#eab839"/><rect x="566.47" y="536.5" width="2.1" height="0.6" fill="#b04a70"/><rect x="569.56" y="483.1" width="2.1" height="53.5" fill="#6ba25e"/><rect x="569.56" y="535.6" width="2.1" height="0.9" fill="#eab839"/><rect x="569.56" y="536.5" width="2.1" height="0.6" fill="#b04a70"/><rect x="572.65" y="486.2" width="2.1" height="50.4" fill="#6ba25e"/><rect x="572.65" y="535.6" width="2.1" height="0.9" fill="#eab839"/><rect x="572.65" y="536.5" width="2.1" height="0.6" fill="#b04a70"/><rect x="575.74" y="485.2" width="2.1" height="51.4" fill="#6ba25e"/><rect x="575.74" y="535.6" width="2.1" height="0.9" fill="#eab839"/><rect x="575.74" y="536.5" width="2.1" height="0.6" fill="#b04a70"/><rect x="578.82" y="486.0" width="2.1" height="50.6" fill="#6ba25e"/><rect x="578.82" y="535.6" width="2.1" height="0.9" fill="#eab839"/><rect x="578.82" y="536.5" width="2.1" height="0.6" fill="#b04a70"/><rect x="581.91" y="486.0" width="2.1" height="50.6" fill="#6ba25e"/><rect x="581.91" y="535.6" width="2.1" height="0.9" fill="#eab839"/><rect x="581.91" y="536.5" width="2.1" height="0.6" fill="#b04a70"/><rect x="585.00" y="487.8" width="2.1" height="48.9" fill="#6ba25e"/><rect x="585.00" y="535.6" width="2.1" height="0.9" fill="#eab839"/><rect x="585.00" y="536.5" width="2.1" height="0.6" fill="#b04a70"/><rect x="588.09" y="486.5" width="2.1" height="50.1" fill="#6ba25e"/><rect x="588.09" y="535.6" width="2.1" height="0.9" fill="#eab839"/><rect x="588.09" y="536.5" width="2.1" height="0.6" fill="#b04a70"/><rect x="591.18" y="487.8" width="2.1" height="48.9" fill="#6ba25e"/><rect x="591.18" y="535.6" width="2.1" height="0.9" fill="#eab839"/><rect x="591.18" y="536.5" width="2.1" height="0.6" fill="#b04a70"/><rect x="594.26" y="488.1" width="2.1" height="48.5" fill="#6ba25e"/><rect x="594.26" y="535.6" width="2.1" height="0.9" fill="#eab839"/><rect x="594.26" y="536.5" width="2.1" height="0.6" fill="#b04a70"/><rect x="597.35" y="484.4" width="2.1" height="52.2" fill="#6ba25e"/><rect x="597.35" y="535.6" width="2.1" height="0.9" fill="#eab839"/><rect x="597.35" y="536.5" width="2.1" height="0.6" fill="#b04a70"/><rect x="600.44" y="486.9" width="2.1" height="49.7" fill="#6ba25e"/><rect x="600.44" y="535.6" width="2.1" height="0.9" fill="#eab839"/><rect x="600.44" y="536.5" width="2.1" height="0.6" fill="#b04a70"/><rect x="603.53" y="485.2" width="2.1" height="51.4" fill="#6ba25e"/><rect x="603.53" y="535.6" width="2.1" height="0.9" fill="#eab839"/><rect x="603.53" y="536.5" width="2.1" height="0.6" fill="#b04a70"/><rect x="606.62" y="484.4" width="2.1" height="52.2" fill="#6ba25e"/><rect x="606.62" y="535.6" width="2.1" height="0.9" fill="#eab839"/><rect x="606.62" y="536.5" width="2.1" height="0.6" fill="#b04a70"/><rect x="609.70" y="485.0" width="2.1" height="51.6" fill="#6ba25e"/><rect x="609.70" y="535.6" width="2.1" height="0.9" fill="#eab839"/><rect x="609.70" y="536.5" width="2.1" height="0.6" fill="#b04a70"/><rect x="612.79" y="485.2" width="2.1" height="51.4" fill="#6ba25e"/><rect x="612.79" y="535.6" width="2.1" height="0.9" fill="#eab839"/><rect x="612.79" y="536.5" width="2.1" height="0.6" fill="#b04a70"/><rect x="615.88" y="485.2" width="2.1" height="51.4" fill="#6ba25e"/><rect x="615.88" y="535.6" width="2.1" height="0.9" fill="#eab839"/><rect x="615.88" y="536.5" width="2.1" height="0.6" fill="#b04a70"/><rect x="618.97" y="488.5" width="2.1" height="48.1" fill="#6ba25e"/><rect x="618.97" y="535.6" width="2.1" height="0.9" fill="#eab839"/><rect x="618.97" y="536.5" width="2.1" height="0.6" fill="#b04a70"/><rect x="622.06" y="488.1" width="2.1" height="48.5" fill="#6ba25e"/><rect x="622.06" y="535.6" width="2.1" height="0.9" fill="#eab839"/><rect x="622.06" y="536.5" width="2.1" height="0.6" fill="#b04a70"/><rect x="625.14" y="486.5" width="2.1" height="50.1" fill="#6ba25e"/><rect x="625.14" y="535.6" width="2.1" height="0.9" fill="#eab839"/><rect x="625.14" y="536.5" width="2.1" height="0.6" fill="#b04a70"/><rect x="628.23" y="488.5" width="2.1" height="48.1" fill="#6ba25e"/><rect x="628.23" y="535.6" width="2.1" height="0.9" fill="#eab839"/><rect x="628.23" y="536.5" width="2.1" height="0.6" fill="#b04a70"/><rect x="631.32" y="489.8" width="2.1" height="46.9" fill="#6ba25e"/><rect x="631.32" y="535.6" width="2.1" height="0.9" fill="#eab839"/><rect x="631.32" y="536.5" width="2.1" height="0.6" fill="#b04a70"/><rect x="634.41" y="488.1" width="2.1" height="48.5" fill="#6ba25e"/><rect x="634.41" y="535.6" width="2.1" height="0.9" fill="#eab839"/><rect x="634.41" y="536.5" width="2.1" height="0.6" fill="#b04a70"/><rect x="637.50" y="486.9" width="2.1" height="49.7" fill="#6ba25e"/><rect x="637.50" y="535.6" width="2.1" height="0.9" fill="#eab839"/><rect x="637.50" y="536.5" width="2.1" height="0.6" fill="#b04a70"/><rect x="640.58" y="485.0" width="2.1" height="51.6" fill="#6ba25e"/><rect x="640.58" y="535.6" width="2.1" height="0.9" fill="#eab839"/><rect x="640.58" y="536.5" width="2.1" height="0.6" fill="#b04a70"/><rect x="643.67" y="482.5" width="2.1" height="54.1" fill="#6ba25e"/><rect x="643.67" y="535.6" width="2.1" height="0.9" fill="#eab839"/><rect x="643.67" y="536.5" width="2.1" height="0.6" fill="#b04a70"/><rect x="646.76" y="484.0" width="2.1" height="52.6" fill="#6ba25e"/><rect x="646.76" y="535.6" width="2.1" height="0.9" fill="#eab839"/><rect x="646.76" y="536.5" width="2.1" height="0.6" fill="#b04a70"/><rect x="649.85" y="487.2" width="2.1" height="49.4" fill="#6ba25e"/><rect x="649.85" y="535.6" width="2.1" height="0.9" fill="#eab839"/><rect x="649.85" y="536.5" width="2.1" height="0.6" fill="#b04a70"/><rect x="652.94" y="485.6" width="2.1" height="51.0" fill="#6ba25e"/><rect x="652.94" y="535.6" width="2.1" height="0.9" fill="#eab839"/><rect x="652.94" y="536.5" width="2.1" height="0.6" fill="#b04a70"/><rect x="656.02" y="487.5" width="2.1" height="49.1" fill="#6ba25e"/><rect x="656.02" y="535.6" width="2.1" height="0.9" fill="#eab839"/><rect x="656.02" y="536.5" width="2.1" height="0.6" fill="#b04a70"/><rect x="659.11" y="485.0" width="2.1" height="51.6" fill="#6ba25e"/><rect x="659.11" y="535.6" width="2.1" height="0.9" fill="#eab839"/><rect x="659.11" y="536.5" width="2.1" height="0.6" fill="#b04a70"/><rect x="662.20" y="485.6" width="2.1" height="51.0" fill="#6ba25e"/><rect x="662.20" y="535.6" width="2.1" height="0.9" fill="#eab839"/><rect x="662.20" y="536.5" width="2.1" height="0.6" fill="#b04a70"/><rect x="665.29" y="486.0" width="2.1" height="50.6" fill="#6ba25e"/><rect x="665.29" y="535.6" width="2.1" height="0.9" fill="#eab839"/><rect x="665.29" y="536.5" width="2.1" height="0.6" fill="#b04a70"/><rect x="668.38" y="486.9" width="2.1" height="49.7" fill="#6ba25e"/><rect x="668.38" y="535.6" width="2.1" height="0.9" fill="#eab839"/><rect x="668.38" y="536.5" width="2.1" height="0.6" fill="#b04a70"/><rect x="671.46" y="487.8" width="2.1" height="48.9" fill="#6ba25e"/><rect x="671.46" y="535.6" width="2.1" height="0.9" fill="#eab839"/><rect x="671.46" y="536.5" width="2.1" height="0.6" fill="#b04a70"/><rect x="674.55" y="486.0" width="2.1" height="50.6" fill="#6ba25e"/><rect x="674.55" y="535.6" width="2.1" height="0.9" fill="#eab839"/><rect x="674.55" y="536.5" width="2.1" height="0.6" fill="#b04a70"/><rect x="677.64" y="486.2" width="2.1" height="50.4" fill="#6ba25e"/><rect x="677.64" y="535.6" width="2.1" height="0.9" fill="#eab839"/><rect x="677.64" y="536.5" width="2.1" height="0.6" fill="#b04a70"/><rect x="680.73" y="487.8" width="2.1" height="48.9" fill="#6ba25e"/><rect x="680.73" y="535.6" width="2.1" height="0.9" fill="#eab839"/><rect x="680.73" y="536.5" width="2.1" height="0.6" fill="#b04a70"/><rect x="683.82" y="487.8" width="2.1" height="48.9" fill="#6ba25e"/><rect x="683.82" y="535.6" width="2.1" height="0.9" fill="#eab839"/><rect x="683.82" y="536.5" width="2.1" height="0.6" fill="#b04a70"/><rect x="686.90" y="485.6" width="2.1" height="51.0" fill="#6ba25e"/><rect x="686.90" y="535.6" width="2.1" height="0.9" fill="#eab839"/><rect x="686.90" y="536.5" width="2.1" height="0.6" fill="#b04a70"/><rect x="689.99" y="483.1" width="2.1" height="53.5" fill="#6ba25e"/><rect x="689.99" y="535.6" width="2.1" height="0.9" fill="#eab839"/><rect x="689.99" y="536.5" width="2.1" height="0.6" fill="#b04a70"/><rect x="693.08" y="487.8" width="2.1" height="48.9" fill="#6ba25e"/><rect x="693.08" y="535.6" width="2.1" height="0.9" fill="#eab839"/><rect x="693.08" y="536.5" width="2.1" height="0.6" fill="#b04a70"/><rect x="696.17" y="487.8" width="2.1" height="48.9" fill="#6ba25e"/><rect x="696.17" y="535.6" width="2.1" height="0.9" fill="#eab839"/><rect x="696.17" y="536.5" width="2.1" height="0.6" fill="#b04a70"/><rect x="699.26" y="486.0" width="2.1" height="50.6" fill="#6ba25e"/><rect x="699.26" y="535.6" width="2.1" height="0.9" fill="#eab839"/><rect x="699.26" y="536.5" width="2.1" height="0.6" fill="#b04a70"/><rect x="702.34" y="482.5" width="2.1" height="54.1" fill="#6ba25e"/><rect x="702.34" y="535.6" width="2.1" height="0.9" fill="#eab839"/><rect x="702.34" y="536.5" width="2.1" height="0.6" fill="#b04a70"/><rect x="705.43" y="481.0" width="2.1" height="55.6" fill="#6ba25e"/><rect x="705.43" y="535.6" width="2.1" height="0.9" fill="#eab839"/><rect x="705.43" y="536.5" width="2.1" height="0.6" fill="#b04a70"/><rect x="708.52" y="480.2" width="2.1" height="56.4" fill="#6ba25e"/><rect x="708.52" y="535.6" width="2.1" height="0.9" fill="#eab839"/><rect x="708.52" y="536.5" width="2.1" height="0.6" fill="#b04a70"/><rect x="711.61" y="477.8" width="2.1" height="58.9" fill="#6ba25e"/><rect x="711.61" y="535.6" width="2.1" height="0.9" fill="#eab839"/><rect x="711.61" y="536.5" width="2.1" height="0.6" fill="#b04a70"/><rect x="714.70" y="476.2" width="2.1" height="60.4" fill="#6ba25e"/><rect x="714.70" y="535.6" width="2.1" height="0.9" fill="#eab839"/><rect x="714.70" y="536.5" width="2.1" height="0.6" fill="#b04a70"/><rect x="717.78" y="476.9" width="2.1" height="59.7" fill="#6ba25e"/><rect x="717.78" y="535.6" width="2.1" height="0.9" fill="#eab839"/><rect x="717.78" y="536.5" width="2.1" height="0.6" fill="#b04a70"/><rect x="720.87" y="477.5" width="2.1" height="59.1" fill="#6ba25e"/><rect x="720.87" y="535.6" width="2.1" height="0.9" fill="#eab839"/><rect x="720.87" y="536.5" width="2.1" height="0.6" fill="#b04a70"/><rect x="723.96" y="478.1" width="2.1" height="58.5" fill="#6ba25e"/><rect x="723.96" y="535.6" width="2.1" height="0.9" fill="#eab839"/><rect x="723.96" y="536.5" width="2.1" height="0.6" fill="#b04a70"/><rect x="727.05" y="479.4" width="2.1" height="57.2" fill="#6ba25e"/><rect x="727.05" y="535.6" width="2.1" height="0.9" fill="#eab839"/><rect x="727.05" y="536.5" width="2.1" height="0.6" fill="#b04a70"/><rect x="730.14" y="479.4" width="2.1" height="57.2" fill="#6ba25e"/><rect x="730.14" y="535.6" width="2.1" height="0.9" fill="#eab839"/><rect x="730.14" y="536.5" width="2.1" height="0.6" fill="#b04a70"/><rect x="733.22" y="478.5" width="2.1" height="58.1" fill="#6ba25e"/><rect x="733.22" y="535.6" width="2.1" height="0.9" fill="#eab839"/><rect x="733.22" y="536.5" width="2.1" height="0.6" fill="#b04a70"/><rect x="736.31" y="479.0" width="2.1" height="57.6" fill="#6ba25e"/><rect x="736.31" y="535.6" width="2.1" height="0.9" fill="#eab839"/><rect x="736.31" y="536.5" width="2.1" height="0.6" fill="#b04a70"/><rect x="739.40" y="480.2" width="2.1" height="56.4" fill="#6ba25e"/><rect x="739.40" y="535.6" width="2.1" height="0.9" fill="#eab839"/><rect x="739.40" y="536.5" width="2.1" height="0.6" fill="#b04a70"/><rect x="742.49" y="481.2" width="2.1" height="55.4" fill="#6ba25e"/><rect x="742.49" y="535.6" width="2.1" height="0.9" fill="#eab839"/><rect x="742.49" y="536.5" width="2.1" height="0.6" fill="#b04a70"/><rect x="745.58" y="481.2" width="2.1" height="55.4" fill="#6ba25e"/><rect x="745.58" y="535.6" width="2.1" height="0.9" fill="#eab839"/><rect x="745.58" y="536.5" width="2.1" height="0.6" fill="#b04a70"/><rect x="748.66" y="481.5" width="2.1" height="55.1" fill="#6ba25e"/><rect x="748.66" y="535.6" width="2.1" height="0.9" fill="#eab839"/><rect x="748.66" y="536.5" width="2.1" height="0.6" fill="#b04a70"/><rect x="751.75" y="481.5" width="2.1" height="55.1" fill="#6ba25e"/><rect x="751.75" y="535.6" width="2.1" height="0.9" fill="#eab839"/><rect x="751.75" y="536.5" width="2.1" height="0.6" fill="#b04a70"/><rect x="754.84" y="476.0" width="2.1" height="60.6" fill="#6ba25e"/><rect x="754.84" y="535.6" width="2.1" height="0.9" fill="#eab839"/><rect x="754.84" y="536.5" width="2.1" height="0.6" fill="#b04a70"/><rect x="757.93" y="477.2" width="2.1" height="59.4" fill="#6ba25e"/><rect x="757.93" y="535.6" width="2.1" height="0.9" fill="#eab839"/><rect x="757.93" y="536.5" width="2.1" height="0.6" fill="#b04a70"/><rect x="761.02" y="477.5" width="2.1" height="59.1" fill="#6ba25e"/><rect x="761.02" y="535.6" width="2.1" height="0.9" fill="#eab839"/><rect x="761.02" y="536.5" width="2.1" height="0.6" fill="#b04a70"/><rect x="764.10" y="478.1" width="2.1" height="58.5" fill="#6ba25e"/><rect x="764.10" y="535.6" width="2.1" height="0.9" fill="#eab839"/><rect x="764.10" y="536.5" width="2.1" height="0.6" fill="#b04a70"/><rect x="767.19" y="479.0" width="2.1" height="57.6" fill="#6ba25e"/><rect x="767.19" y="535.6" width="2.1" height="0.9" fill="#eab839"/><rect x="767.19" y="536.5" width="2.1" height="0.6" fill="#b04a70"/><rect x="770.28" y="478.8" width="2.1" height="57.9" fill="#6ba25e"/><rect x="770.28" y="535.6" width="2.1" height="0.9" fill="#eab839"/><rect x="770.28" y="536.5" width="2.1" height="0.6" fill="#b04a70"/><rect x="773.37" y="478.8" width="2.1" height="57.9" fill="#6ba25e"/><rect x="773.37" y="535.6" width="2.1" height="0.9" fill="#eab839"/><rect x="773.37" y="536.5" width="2.1" height="0.6" fill="#b04a70"/><rect x="776.46" y="479.0" width="2.1" height="57.6" fill="#6ba25e"/><rect x="776.46" y="535.6" width="2.1" height="0.9" fill="#eab839"/><rect x="776.46" y="536.5" width="2.1" height="0.6" fill="#b04a70"/><rect x="779.54" y="481.0" width="2.1" height="55.6" fill="#6ba25e"/><rect x="779.54" y="535.6" width="2.1" height="0.9" fill="#eab839"/><rect x="779.54" y="536.5" width="2.1" height="0.6" fill="#b04a70"/><rect x="782.63" y="479.4" width="2.1" height="57.2" fill="#6ba25e"/><rect x="782.63" y="535.6" width="2.1" height="0.9" fill="#eab839"/><rect x="782.63" y="536.5" width="2.1" height="0.6" fill="#b04a70"/><rect x="785.72" y="481.0" width="2.1" height="55.6" fill="#6ba25e"/><rect x="785.72" y="535.6" width="2.1" height="0.9" fill="#eab839"/><rect x="785.72" y="536.5" width="2.1" height="0.6" fill="#b04a70"/><rect x="788.81" y="481.2" width="2.1" height="55.4" fill="#6ba25e"/><rect x="788.81" y="535.6" width="2.1" height="0.9" fill="#eab839"/><rect x="788.81" y="536.5" width="2.1" height="0.6" fill="#b04a70"/><rect x="791.90" y="478.1" width="2.1" height="58.5" fill="#6ba25e"/><rect x="791.90" y="535.6" width="2.1" height="0.9" fill="#eab839"/><rect x="791.90" y="536.5" width="2.1" height="0.6" fill="#b04a70"/><rect x="794.98" y="476.9" width="2.1" height="59.7" fill="#6ba25e"/><rect x="794.98" y="535.6" width="2.1" height="0.9" fill="#eab839"/><rect x="794.98" y="536.5" width="2.1" height="0.6" fill="#b04a70"/><rect x="798.07" y="477.8" width="2.1" height="58.9" fill="#6ba25e"/><rect x="798.07" y="535.6" width="2.1" height="0.9" fill="#eab839"/><rect x="798.07" y="536.5" width="2.1" height="0.6" fill="#b04a70"/><rect x="801.16" y="477.2" width="2.1" height="59.4" fill="#6ba25e"/><rect x="801.16" y="535.6" width="2.1" height="0.9" fill="#eab839"/><rect x="801.16" y="536.5" width="2.1" height="0.6" fill="#b04a70"/><rect x="804.25" y="477.2" width="2.1" height="59.4" fill="#6ba25e"/><rect x="804.25" y="535.6" width="2.1" height="0.9" fill="#eab839"/><rect x="804.25" y="536.5" width="2.1" height="0.6" fill="#b04a70"/><rect x="807.34" y="478.5" width="2.1" height="58.1" fill="#6ba25e"/><rect x="807.34" y="535.6" width="2.1" height="0.9" fill="#eab839"/><rect x="807.34" y="536.5" width="2.1" height="0.6" fill="#b04a70"/><rect x="810.42" y="478.8" width="2.1" height="57.9" fill="#6ba25e"/><rect x="810.42" y="535.6" width="2.1" height="0.9" fill="#eab839"/><rect x="810.42" y="536.5" width="2.1" height="0.6" fill="#b04a70"/><rect x="813.51" y="479.0" width="2.1" height="57.6" fill="#6ba25e"/><rect x="813.51" y="535.6" width="2.1" height="0.9" fill="#eab839"/><rect x="813.51" y="536.5" width="2.1" height="0.6" fill="#b04a70"/><rect x="816.60" y="479.4" width="2.1" height="57.2" fill="#6ba25e"/><rect x="816.60" y="535.6" width="2.1" height="0.9" fill="#eab839"/><rect x="816.60" y="536.5" width="2.1" height="0.6" fill="#b04a70"/><rect x="819.69" y="480.0" width="2.1" height="56.6" fill="#6ba25e"/><rect x="819.69" y="535.6" width="2.1" height="0.9" fill="#eab839"/><rect x="819.69" y="536.5" width="2.1" height="0.6" fill="#b04a70"/><rect x="822.78" y="480.2" width="2.1" height="56.4" fill="#6ba25e"/><rect x="822.78" y="535.6" width="2.1" height="0.9" fill="#eab839"/><rect x="822.78" y="536.5" width="2.1" height="0.6" fill="#b04a70"/><rect x="825.86" y="481.0" width="2.1" height="55.6" fill="#6ba25e"/><rect x="825.86" y="535.6" width="2.1" height="0.9" fill="#eab839"/><rect x="825.86" y="536.5" width="2.1" height="0.6" fill="#b04a70"/><rect x="828.95" y="481.9" width="2.1" height="54.7" fill="#6ba25e"/><rect x="828.95" y="535.6" width="2.1" height="0.9" fill="#eab839"/><rect x="828.95" y="536.5" width="2.1" height="0.6" fill="#b04a70"/><rect x="832.04" y="481.2" width="2.1" height="55.4" fill="#6ba25e"/><rect x="832.04" y="535.6" width="2.1" height="0.9" fill="#eab839"/><rect x="832.04" y="536.5" width="2.1" height="0.6" fill="#b04a70"/><rect x="835.13" y="478.5" width="2.1" height="58.1" fill="#6ba25e"/><rect x="835.13" y="535.6" width="2.1" height="0.9" fill="#eab839"/><rect x="835.13" y="536.5" width="2.1" height="0.6" fill="#b04a70"/><rect x="838.22" y="476.0" width="2.1" height="60.6" fill="#6ba25e"/><rect x="838.22" y="535.6" width="2.1" height="0.9" fill="#eab839"/><rect x="838.22" y="536.5" width="2.1" height="0.6" fill="#b04a70"/><rect x="841.30" y="477.5" width="2.1" height="59.1" fill="#6ba25e"/><rect x="841.30" y="535.6" width="2.1" height="0.9" fill="#eab839"/><rect x="841.30" y="536.5" width="2.1" height="0.6" fill="#b04a70"/><rect x="844.39" y="477.8" width="2.1" height="58.9" fill="#6ba25e"/><rect x="844.39" y="535.6" width="2.1" height="0.9" fill="#eab839"/><rect x="844.39" y="536.5" width="2.1" height="0.6" fill="#b04a70"/><rect x="847.48" y="478.1" width="2.1" height="58.5" fill="#6ba25e"/><rect x="847.48" y="535.6" width="2.1" height="0.9" fill="#eab839"/><rect x="847.48" y="536.5" width="2.1" height="0.6" fill="#b04a70"/><rect x="850.57" y="479.0" width="2.1" height="57.6" fill="#6ba25e"/><rect x="850.57" y="535.6" width="2.1" height="0.9" fill="#eab839"/><rect x="850.57" y="536.5" width="2.1" height="0.6" fill="#b04a70"/><rect x="853.66" y="479.0" width="2.1" height="57.6" fill="#6ba25e"/><rect x="853.66" y="535.6" width="2.1" height="0.9" fill="#eab839"/><rect x="853.66" y="536.5" width="2.1" height="0.6" fill="#b04a70"/><rect x="856.74" y="478.8" width="2.1" height="57.9" fill="#6ba25e"/><rect x="856.74" y="535.6" width="2.1" height="0.9" fill="#eab839"/><rect x="856.74" y="536.5" width="2.1" height="0.6" fill="#b04a70"/><rect x="859.83" y="479.0" width="2.1" height="57.6" fill="#6ba25e"/><rect x="859.83" y="535.6" width="2.1" height="0.9" fill="#eab839"/><rect x="859.83" y="536.5" width="2.1" height="0.6" fill="#b04a70"/><rect x="862.92" y="479.8" width="2.1" height="56.9" fill="#6ba25e"/><rect x="862.92" y="535.6" width="2.1" height="0.9" fill="#eab839"/><rect x="862.92" y="536.5" width="2.1" height="0.6" fill="#b04a70"/><rect x="866.01" y="481.0" width="2.1" height="55.6" fill="#6ba25e"/><rect x="866.01" y="535.6" width="2.1" height="0.9" fill="#eab839"/><rect x="866.01" y="536.5" width="2.1" height="0.6" fill="#b04a70"/><rect x="869.10" y="480.6" width="2.1" height="56.0" fill="#6ba25e"/><rect x="869.10" y="535.6" width="2.1" height="0.9" fill="#eab839"/><rect x="869.10" y="536.5" width="2.1" height="0.6" fill="#b04a70"/><rect x="872.18" y="481.0" width="2.1" height="55.6" fill="#6ba25e"/><rect x="872.18" y="535.6" width="2.1" height="0.9" fill="#eab839"/><rect x="872.18" y="536.5" width="2.1" height="0.6" fill="#b04a70"/><rect x="875.27" y="481.0" width="2.1" height="55.6" fill="#6ba25e"/><rect x="875.27" y="535.6" width="2.1" height="0.9" fill="#eab839"/><rect x="875.27" y="536.5" width="2.1" height="0.6" fill="#b04a70"/><rect x="878.36" y="478.1" width="2.1" height="58.5" fill="#6ba25e"/><rect x="878.36" y="535.6" width="2.1" height="0.9" fill="#eab839"/><rect x="878.36" y="536.5" width="2.1" height="0.6" fill="#b04a70"/><rect x="881.45" y="476.0" width="2.1" height="60.6" fill="#6ba25e"/><rect x="881.45" y="535.6" width="2.1" height="0.9" fill="#eab839"/><rect x="881.45" y="536.5" width="2.1" height="0.6" fill="#b04a70"/><rect x="884.54" y="477.2" width="2.1" height="59.4" fill="#6ba25e"/><rect x="884.54" y="535.6" width="2.1" height="0.9" fill="#eab839"/><rect x="884.54" y="536.5" width="2.1" height="0.6" fill="#b04a70"/><rect x="887.62" y="478.8" width="2.1" height="57.9" fill="#6ba25e"/><rect x="887.62" y="535.6" width="2.1" height="0.9" fill="#eab839"/><rect x="887.62" y="536.5" width="2.1" height="0.6" fill="#b04a70"/><rect x="890.71" y="478.8" width="2.1" height="57.9" fill="#6ba25e"/><rect x="890.71" y="535.6" width="2.1" height="0.9" fill="#eab839"/><rect x="890.71" y="536.5" width="2.1" height="0.6" fill="#b04a70"/><rect x="893.80" y="479.0" width="2.1" height="57.6" fill="#6ba25e"/><rect x="893.80" y="535.6" width="2.1" height="0.9" fill="#eab839"/><rect x="893.80" y="536.5" width="2.1" height="0.6" fill="#b04a70"/><rect x="896.89" y="479.0" width="2.1" height="57.6" fill="#6ba25e"/><rect x="896.89" y="535.6" width="2.1" height="0.9" fill="#eab839"/><rect x="896.89" y="536.5" width="2.1" height="0.6" fill="#b04a70"/><rect x="899.98" y="479.0" width="2.1" height="57.6" fill="#6ba25e"/><rect x="899.98" y="535.6" width="2.1" height="0.9" fill="#eab839"/><rect x="899.98" y="536.5" width="2.1" height="0.6" fill="#b04a70"/><rect x="903.06" y="479.8" width="2.1" height="56.9" fill="#6ba25e"/><rect x="903.06" y="535.6" width="2.1" height="0.9" fill="#eab839"/><rect x="903.06" y="536.5" width="2.1" height="0.6" fill="#b04a70"/><rect x="906.15" y="479.4" width="2.1" height="57.2" fill="#6ba25e"/><rect x="906.15" y="535.6" width="2.1" height="0.9" fill="#eab839"/><rect x="906.15" y="536.5" width="2.1" height="0.6" fill="#b04a70"/><rect x="909.24" y="480.2" width="2.1" height="56.4" fill="#6ba25e"/><rect x="909.24" y="535.6" width="2.1" height="0.9" fill="#eab839"/><rect x="909.24" y="536.5" width="2.1" height="0.6" fill="#b04a70"/><rect x="912.33" y="480.2" width="2.1" height="56.4" fill="#6ba25e"/><rect x="912.33" y="535.6" width="2.1" height="0.9" fill="#eab839"/><rect x="912.33" y="536.5" width="2.1" height="0.6" fill="#b04a70"/><rect x="915.42" y="481.2" width="2.1" height="55.4" fill="#6ba25e"/><rect x="915.42" y="535.6" width="2.1" height="0.9" fill="#eab839"/><rect x="915.42" y="536.5" width="2.1" height="0.6" fill="#b04a70"/><rect x="918.50" y="481.9" width="2.1" height="54.7" fill="#6ba25e"/><rect x="918.50" y="535.6" width="2.1" height="0.9" fill="#eab839"/><rect x="918.50" y="536.5" width="2.1" height="0.6" fill="#b04a70"/><rect x="921.59" y="480.2" width="2.1" height="56.4" fill="#6ba25e"/><rect x="921.59" y="535.6" width="2.1" height="0.9" fill="#eab839"/><rect x="921.59" y="536.5" width="2.1" height="0.6" fill="#b04a70"/><rect x="924.68" y="476.0" width="2.1" height="60.6" fill="#6ba25e"/><rect x="924.68" y="535.6" width="2.1" height="0.9" fill="#eab839"/><rect x="924.68" y="536.5" width="2.1" height="0.6" fill="#b04a70"/><rect x="927.77" y="479.0" width="2.1" height="57.6" fill="#6ba25e"/><rect x="927.77" y="535.6" width="2.1" height="0.9" fill="#eab839"/><rect x="927.77" y="536.5" width="2.1" height="0.6" fill="#b04a70"/><rect x="930.86" y="477.2" width="2.1" height="59.4" fill="#6ba25e"/><rect x="930.86" y="535.6" width="2.1" height="0.9" fill="#eab839"/><rect x="930.86" y="536.5" width="2.1" height="0.6" fill="#b04a70"/><rect x="933.94" y="478.1" width="2.1" height="58.5" fill="#6ba25e"/><rect x="933.94" y="535.6" width="2.1" height="0.9" fill="#eab839"/><rect x="933.94" y="536.5" width="2.1" height="0.6" fill="#b04a70"/><rect x="937.03" y="478.5" width="2.1" height="58.1" fill="#6ba25e"/><rect x="937.03" y="535.6" width="2.1" height="0.9" fill="#eab839"/><rect x="937.03" y="536.5" width="2.1" height="0.6" fill="#b04a70"/><rect x="940.12" y="478.1" width="2.1" height="58.5" fill="#6ba25e"/><rect x="940.12" y="535.6" width="2.1" height="0.9" fill="#eab839"/><rect x="940.12" y="536.5" width="2.1" height="0.6" fill="#b04a70"/><rect x="943.21" y="478.5" width="2.1" height="58.1" fill="#6ba25e"/><rect x="943.21" y="535.6" width="2.1" height="0.9" fill="#eab839"/><rect x="943.21" y="536.5" width="2.1" height="0.6" fill="#b04a70"/><rect x="946.30" y="479.0" width="2.1" height="57.6" fill="#6ba25e"/><rect x="946.30" y="535.6" width="2.1" height="0.9" fill="#eab839"/><rect x="946.30" y="536.5" width="2.1" height="0.6" fill="#b04a70"/><rect x="949.38" y="479.4" width="2.1" height="57.2" fill="#6ba25e"/><rect x="949.38" y="535.6" width="2.1" height="0.9" fill="#eab839"/><rect x="949.38" y="536.5" width="2.1" height="0.6" fill="#b04a70"/><rect x="952.47" y="480.0" width="2.1" height="56.6" fill="#6ba25e"/><rect x="952.47" y="535.6" width="2.1" height="0.9" fill="#eab839"/><rect x="952.47" y="536.5" width="2.1" height="0.6" fill="#b04a70"/><rect x="955.56" y="480.6" width="2.1" height="56.0" fill="#6ba25e"/><rect x="955.56" y="535.6" width="2.1" height="0.9" fill="#eab839"/><rect x="955.56" y="536.5" width="2.1" height="0.6" fill="#b04a70"/><rect x="958.65" y="479.8" width="2.1" height="56.9" fill="#6ba25e"/><rect x="958.65" y="535.6" width="2.1" height="0.9" fill="#eab839"/><rect x="958.65" y="536.5" width="2.1" height="0.6" fill="#b04a70"/><rect x="961.74" y="481.0" width="2.1" height="55.6" fill="#6ba25e"/><rect x="961.74" y="535.6" width="2.1" height="0.9" fill="#eab839"/><rect x="961.74" y="536.5" width="2.1" height="0.6" fill="#b04a70"/><rect x="964.82" y="481.0" width="2.1" height="55.6" fill="#6ba25e"/><rect x="964.82" y="535.6" width="2.1" height="0.9" fill="#eab839"/><rect x="964.82" y="536.5" width="2.1" height="0.6" fill="#b04a70"/><rect x="967.91" y="476.9" width="2.1" height="59.7" fill="#6ba25e"/><rect x="967.91" y="535.6" width="2.1" height="0.9" fill="#eab839"/><rect x="967.91" y="536.5" width="2.1" height="0.6" fill="#b04a70"/><rect x="971.00" y="476.5" width="2.1" height="60.1" fill="#6ba25e"/><rect x="971.00" y="535.6" width="2.1" height="0.9" fill="#eab839"/><rect x="971.00" y="536.5" width="2.1" height="0.6" fill="#b04a70"/><rect x="974.09" y="477.2" width="2.1" height="59.4" fill="#6ba25e"/><rect x="974.09" y="535.6" width="2.1" height="0.9" fill="#eab839"/><rect x="974.09" y="536.5" width="2.1" height="0.6" fill="#b04a70"/><rect x="977.18" y="478.1" width="2.1" height="58.5" fill="#6ba25e"/><rect x="977.18" y="535.6" width="2.1" height="0.9" fill="#eab839"/><rect x="977.18" y="536.5" width="2.1" height="0.6" fill="#b04a70"/><rect x="980.26" y="478.5" width="2.1" height="58.1" fill="#6ba25e"/><rect x="980.26" y="535.6" width="2.1" height="0.9" fill="#eab839"/><rect x="980.26" y="536.5" width="2.1" height="0.6" fill="#b04a70"/><rect x="983.35" y="479.4" width="2.1" height="57.2" fill="#6ba25e"/><rect x="983.35" y="535.6" width="2.1" height="0.9" fill="#eab839"/><rect x="983.35" y="536.5" width="2.1" height="0.6" fill="#b04a70"/><rect x="986.44" y="478.5" width="2.1" height="58.1" fill="#6ba25e"/><rect x="986.44" y="535.6" width="2.1" height="0.9" fill="#eab839"/><rect x="986.44" y="536.5" width="2.1" height="0.6" fill="#b04a70"/><rect x="989.53" y="481.5" width="2.1" height="55.1" fill="#6ba25e"/><rect x="989.53" y="535.6" width="2.1" height="0.9" fill="#eab839"/><rect x="989.53" y="536.5" width="2.1" height="0.6" fill="#b04a70"/><rect x="992.62" y="479.0" width="2.1" height="57.6" fill="#6ba25e"/><rect x="992.62" y="535.6" width="2.1" height="0.9" fill="#eab839"/><rect x="992.62" y="536.5" width="2.1" height="0.6" fill="#b04a70"/><rect x="995.70" y="480.6" width="2.1" height="56.0" fill="#6ba25e"/><rect x="995.70" y="535.6" width="2.1" height="0.9" fill="#eab839"/><rect x="995.70" y="536.5" width="2.1" height="0.6" fill="#b04a70"/><rect x="998.79" y="481.0" width="2.1" height="55.6" fill="#6ba25e"/><rect x="998.79" y="535.6" width="2.1" height="0.9" fill="#eab839"/><rect x="998.79" y="536.5" width="2.1" height="0.6" fill="#b04a70"/><rect x="1001.88" y="480.6" width="2.1" height="56.0" fill="#6ba25e"/><rect x="1001.88" y="535.6" width="2.1" height="0.9" fill="#eab839"/><rect x="1001.88" y="536.5" width="2.1" height="0.6" fill="#b04a70"/><rect x="1004.97" y="481.0" width="2.1" height="55.6" fill="#6ba25e"/><rect x="1004.97" y="535.6" width="2.1" height="0.9" fill="#eab839"/><rect x="1004.97" y="536.5" width="2.1" height="0.6" fill="#b04a70"/><rect x="1008.06" y="480.0" width="2.1" height="56.6" fill="#6ba25e"/><rect x="1008.06" y="535.6" width="2.1" height="0.9" fill="#eab839"/><rect x="1008.06" y="536.5" width="2.1" height="0.6" fill="#b04a70"/><rect x="1011.14" y="476.5" width="2.1" height="60.1" fill="#6ba25e"/><rect x="1011.14" y="535.6" width="2.1" height="0.9" fill="#eab839"/><rect x="1011.14" y="536.5" width="2.1" height="0.6" fill="#b04a70"/><rect x="1014.23" y="476.5" width="2.1" height="60.1" fill="#6ba25e"/><rect x="1014.23" y="535.6" width="2.1" height="0.9" fill="#eab839"/><rect x="1014.23" y="536.5" width="2.1" height="0.6" fill="#b04a70"/><rect x="1017.32" y="476.5" width="2.1" height="60.1" fill="#6ba25e"/><rect x="1017.32" y="535.6" width="2.1" height="0.9" fill="#eab839"/><rect x="1017.32" y="536.5" width="2.1" height="0.6" fill="#b04a70"/><rect x="1020.41" y="478.1" width="2.1" height="58.5" fill="#6ba25e"/><rect x="1020.41" y="535.6" width="2.1" height="0.9" fill="#eab839"/><rect x="1020.41" y="536.5" width="2.1" height="0.6" fill="#b04a70"/><rect x="1023.50" y="479.0" width="2.1" height="57.6" fill="#6ba25e"/><rect x="1023.50" y="535.6" width="2.1" height="0.9" fill="#eab839"/><rect x="1023.50" y="536.5" width="2.1" height="0.6" fill="#b04a70"/><rect x="1026.58" y="478.5" width="2.1" height="58.1" fill="#6ba25e"/><rect x="1026.58" y="535.6" width="2.1" height="0.9" fill="#eab839"/><rect x="1026.58" y="536.5" width="2.1" height="0.6" fill="#b04a70"/><rect x="1029.67" y="479.0" width="2.1" height="57.6" fill="#6ba25e"/><rect x="1029.67" y="535.6" width="2.1" height="0.9" fill="#eab839"/><rect x="1029.67" y="536.5" width="2.1" height="0.6" fill="#b04a70"/><rect x="1032.76" y="479.8" width="2.1" height="56.9" fill="#6ba25e"/><rect x="1032.76" y="535.6" width="2.1" height="0.9" fill="#eab839"/><rect x="1032.76" y="536.5" width="2.1" height="0.6" fill="#b04a70"/><rect x="1035.85" y="480.0" width="2.1" height="56.6" fill="#6ba25e"/><rect x="1035.85" y="535.6" width="2.1" height="0.9" fill="#eab839"/><rect x="1035.85" y="536.5" width="2.1" height="0.6" fill="#b04a70"/><rect x="1038.94" y="480.0" width="2.1" height="56.6" fill="#6ba25e"/><rect x="1038.94" y="535.6" width="2.1" height="0.9" fill="#eab839"/><rect x="1038.94" y="536.5" width="2.1" height="0.6" fill="#b04a70"/><rect x="1042.02" y="480.2" width="2.1" height="56.4" fill="#6ba25e"/><rect x="1042.02" y="535.6" width="2.1" height="0.9" fill="#eab839"/><rect x="1042.02" y="536.5" width="2.1" height="0.6" fill="#b04a70"/><rect x="1045.11" y="480.2" width="2.1" height="56.4" fill="#6ba25e"/><rect x="1045.11" y="535.6" width="2.1" height="0.9" fill="#eab839"/><rect x="1045.11" y="536.5" width="2.1" height="0.6" fill="#b04a70"/><rect x="1048.20" y="478.8" width="2.1" height="57.9" fill="#6ba25e"/><rect x="1048.20" y="535.6" width="2.1" height="0.9" fill="#eab839"/><rect x="1048.20" y="536.5" width="2.1" height="0.6" fill="#b04a70"/><rect x="1051.29" y="476.2" width="2.1" height="60.4" fill="#6ba25e"/><rect x="1051.29" y="535.6" width="2.1" height="0.9" fill="#eab839"/><rect x="1051.29" y="536.5" width="2.1" height="0.6" fill="#b04a70"/><rect x="1054.38" y="477.2" width="2.1" height="59.4" fill="#6ba25e"/><rect x="1054.38" y="535.6" width="2.1" height="0.9" fill="#eab839"/><rect x="1054.38" y="536.5" width="2.1" height="0.6" fill="#b04a70"/><rect x="1057.46" y="477.5" width="2.1" height="59.1" fill="#6ba25e"/><rect x="1057.46" y="535.6" width="2.1" height="0.9" fill="#eab839"/><rect x="1057.46" y="536.5" width="2.1" height="0.6" fill="#b04a70"/><rect x="1060.55" y="477.2" width="2.1" height="59.4" fill="#6ba25e"/><rect x="1060.55" y="535.6" width="2.1" height="0.9" fill="#eab839"/><rect x="1060.55" y="536.5" width="2.1" height="0.6" fill="#b04a70"/><rect x="1063.64" y="478.8" width="2.1" height="57.9" fill="#6ba25e"/><rect x="1063.64" y="535.6" width="2.1" height="0.9" fill="#eab839"/><rect x="1063.64" y="536.5" width="2.1" height="0.6" fill="#b04a70"/><rect x="1066.73" y="479.0" width="2.1" height="57.6" fill="#6ba25e"/><rect x="1066.73" y="535.6" width="2.1" height="0.9" fill="#eab839"/><rect x="1066.73" y="536.5" width="2.1" height="0.6" fill="#b04a70"/><rect x="1069.82" y="479.0" width="2.1" height="57.6" fill="#6ba25e"/><rect x="1069.82" y="535.6" width="2.1" height="0.9" fill="#eab839"/><rect x="1069.82" y="536.5" width="2.1" height="0.6" fill="#b04a70"/><rect x="1072.90" y="480.0" width="2.1" height="56.6" fill="#6ba25e"/><rect x="1072.90" y="535.6" width="2.1" height="0.9" fill="#eab839"/><rect x="1072.90" y="536.5" width="2.1" height="0.6" fill="#b04a70"/><rect x="1075.99" y="480.0" width="2.1" height="56.6" fill="#6ba25e"/><rect x="1075.99" y="535.6" width="2.1" height="0.9" fill="#eab839"/><rect x="1075.99" y="536.5" width="2.1" height="0.6" fill="#b04a70"/><rect x="1079.08" y="480.0" width="2.1" height="56.6" fill="#6ba25e"/><rect x="1079.08" y="535.6" width="2.1" height="0.9" fill="#eab839"/><rect x="1079.08" y="536.5" width="2.1" height="0.6" fill="#b04a70"/><rect x="1082.17" y="480.0" width="2.1" height="56.6" fill="#6ba25e"/><rect x="1082.17" y="535.6" width="2.1" height="0.9" fill="#eab839"/><rect x="1082.17" y="536.5" width="2.1" height="0.6" fill="#b04a70"/><rect x="1085.26" y="481.0" width="2.1" height="55.6" fill="#6ba25e"/><rect x="1085.26" y="535.6" width="2.1" height="0.9" fill="#eab839"/><rect x="1085.26" y="536.5" width="2.1" height="0.6" fill="#b04a70"/><rect x="1088.34" y="481.5" width="2.1" height="55.1" fill="#6ba25e"/><rect x="1088.34" y="535.6" width="2.1" height="0.9" fill="#eab839"/><rect x="1088.34" y="536.5" width="2.1" height="0.6" fill="#b04a70"/><rect x="1091.43" y="479.0" width="2.1" height="57.6" fill="#6ba25e"/><rect x="1091.43" y="535.6" width="2.1" height="0.9" fill="#eab839"/><rect x="1091.43" y="536.5" width="2.1" height="0.6" fill="#b04a70"/><rect x="1094.52" y="476.2" width="2.1" height="60.4" fill="#6ba25e"/><rect x="1094.52" y="535.6" width="2.1" height="0.9" fill="#eab839"/><rect x="1094.52" y="536.5" width="2.1" height="0.6" fill="#b04a70"/><rect x="1097.61" y="477.2" width="2.1" height="59.4" fill="#6ba25e"/><rect x="1097.61" y="535.6" width="2.1" height="0.9" fill="#eab839"/><rect x="1097.61" y="536.5" width="2.1" height="0.6" fill="#b04a70"/><rect x="1100.70" y="478.1" width="2.1" height="58.5" fill="#6ba25e"/><rect x="1100.70" y="535.6" width="2.1" height="0.9" fill="#eab839"/><rect x="1100.70" y="536.5" width="2.1" height="0.6" fill="#b04a70"/><rect x="1103.78" y="477.5" width="2.1" height="59.1" fill="#6ba25e"/><rect x="1103.78" y="535.6" width="2.1" height="0.9" fill="#eab839"/><rect x="1103.78" y="536.5" width="2.1" height="0.6" fill="#b04a70"/><rect x="1106.87" y="478.8" width="2.1" height="57.9" fill="#6ba25e"/><rect x="1106.87" y="535.6" width="2.1" height="0.9" fill="#eab839"/><rect x="1106.87" y="536.5" width="2.1" height="0.6" fill="#b04a70"/><rect x="1109.96" y="478.1" width="2.1" height="58.5" fill="#6ba25e"/><rect x="1109.96" y="535.6" width="2.1" height="0.9" fill="#eab839"/><rect x="1109.96" y="536.5" width="2.1" height="0.6" fill="#b04a70"/><rect x="1113.05" y="479.0" width="2.1" height="57.6" fill="#6ba25e"/><rect x="1113.05" y="535.6" width="2.1" height="0.9" fill="#eab839"/><rect x="1113.05" y="536.5" width="2.1" height="0.6" fill="#b04a70"/><rect x="1116.14" y="479.0" width="2.1" height="57.6" fill="#6ba25e"/><rect x="1116.14" y="535.6" width="2.1" height="0.9" fill="#eab839"/><rect x="1116.14" y="536.5" width="2.1" height="0.6" fill="#b04a70"/><rect x="1119.22" y="480.0" width="2.1" height="56.6" fill="#6ba25e"/><rect x="1119.22" y="535.6" width="2.1" height="0.9" fill="#eab839"/><rect x="1119.22" y="536.5" width="2.1" height="0.6" fill="#b04a70"/><rect x="1122.31" y="481.0" width="2.1" height="55.6" fill="#6ba25e"/><rect x="1122.31" y="535.6" width="2.1" height="0.9" fill="#eab839"/><rect x="1122.31" y="536.5" width="2.1" height="0.6" fill="#b04a70"/><rect x="1125.40" y="480.6" width="2.1" height="56.0" fill="#6ba25e"/><rect x="1125.40" y="535.6" width="2.1" height="0.9" fill="#eab839"/><rect x="1125.40" y="536.5" width="2.1" height="0.6" fill="#b04a70"/><rect x="1128.49" y="481.9" width="2.1" height="54.7" fill="#6ba25e"/><rect x="1128.49" y="535.6" width="2.1" height="0.9" fill="#eab839"/><rect x="1128.49" y="536.5" width="2.1" height="0.6" fill="#b04a70"/><rect x="1131.58" y="480.0" width="2.1" height="56.6" fill="#6ba25e"/><rect x="1131.58" y="535.6" width="2.1" height="0.9" fill="#eab839"/><rect x="1131.58" y="536.5" width="2.1" height="0.6" fill="#b04a70"/><rect x="1134.66" y="479.8" width="2.1" height="56.9" fill="#6ba25e"/><rect x="1134.66" y="535.6" width="2.1" height="0.9" fill="#eab839"/><rect x="1134.66" y="536.5" width="2.1" height="0.6" fill="#b04a70"/><rect x="1137.75" y="476.2" width="2.1" height="60.4" fill="#6ba25e"/><rect x="1137.75" y="535.6" width="2.1" height="0.9" fill="#eab839"/><rect x="1137.75" y="536.5" width="2.1" height="0.6" fill="#b04a70"/><rect x="1140.84" y="478.1" width="2.1" height="58.5" fill="#6ba25e"/><rect x="1140.84" y="535.6" width="2.1" height="0.9" fill="#eab839"/><rect x="1140.84" y="536.5" width="2.1" height="0.6" fill="#b04a70"/><rect x="1143.93" y="478.1" width="2.1" height="58.5" fill="#6ba25e"/><rect x="1143.93" y="535.6" width="2.1" height="0.9" fill="#eab839"/><rect x="1143.93" y="536.5" width="2.1" height="0.6" fill="#b04a70"/><rect x="1147.02" y="478.1" width="2.1" height="58.5" fill="#6ba25e"/><rect x="1147.02" y="535.6" width="2.1" height="0.9" fill="#eab839"/><rect x="1147.02" y="536.5" width="2.1" height="0.6" fill="#b04a70"/><rect x="1150.10" y="478.8" width="2.1" height="57.9" fill="#6ba25e"/><rect x="1150.10" y="535.6" width="2.1" height="0.9" fill="#eab839"/><rect x="1150.10" y="536.5" width="2.1" height="0.6" fill="#b04a70"/><rect x="1153.19" y="478.1" width="2.1" height="58.5" fill="#6ba25e"/><rect x="1153.19" y="535.6" width="2.1" height="0.9" fill="#eab839"/><rect x="1153.19" y="536.5" width="2.1" height="0.6" fill="#b04a70"/><rect x="1156.28" y="479.4" width="2.1" height="57.2" fill="#6ba25e"/><rect x="1156.28" y="535.6" width="2.1" height="0.9" fill="#eab839"/><rect x="1156.28" y="536.5" width="2.1" height="0.6" fill="#b04a70"/><rect x="1159.37" y="478.8" width="2.1" height="57.9" fill="#6ba25e"/><rect x="1159.37" y="535.6" width="2.1" height="0.9" fill="#eab839"/><rect x="1159.37" y="536.5" width="2.1" height="0.6" fill="#b04a70"/><rect x="1162.46" y="479.8" width="2.1" height="56.9" fill="#6ba25e"/><rect x="1162.46" y="535.6" width="2.1" height="0.9" fill="#eab839"/><rect x="1162.46" y="536.5" width="2.1" height="0.6" fill="#b04a70"/><rect x="1165.54" y="481.9" width="2.1" height="54.7" fill="#6ba25e"/><rect x="1165.54" y="535.6" width="2.1" height="0.9" fill="#eab839"/><rect x="1165.54" y="536.5" width="2.1" height="0.6" fill="#b04a70"/><rect x="1168.63" y="480.0" width="2.1" height="56.6" fill="#6ba25e"/><rect x="1168.63" y="535.6" width="2.1" height="0.9" fill="#eab839"/><rect x="1168.63" y="536.5" width="2.1" height="0.6" fill="#b04a70"/><rect x="1171.72" y="481.0" width="2.1" height="55.6" fill="#6ba25e"/><rect x="1171.72" y="535.6" width="2.1" height="0.9" fill="#eab839"/><rect x="1171.72" y="536.5" width="2.1" height="0.6" fill="#b04a70"/><rect x="1174.81" y="480.6" width="2.1" height="56.0" fill="#6ba25e"/><rect x="1174.81" y="535.6" width="2.1" height="0.9" fill="#eab839"/><rect x="1174.81" y="536.5" width="2.1" height="0.6" fill="#b04a70"/><rect x="1177.90" y="481.0" width="2.1" height="55.6" fill="#6ba25e"/><rect x="1177.90" y="535.6" width="2.1" height="0.9" fill="#eab839"/><rect x="1177.90" y="536.5" width="2.1" height="0.6" fill="#b04a70"/><rect x="1180.98" y="478.8" width="2.1" height="57.9" fill="#6ba25e"/><rect x="1180.98" y="535.6" width="2.1" height="0.9" fill="#eab839"/><rect x="1180.98" y="536.5" width="2.1" height="0.6" fill="#b04a70"/><rect x="1184.07" y="476.2" width="2.1" height="60.4" fill="#6ba25e"/><rect x="1184.07" y="535.6" width="2.1" height="0.9" fill="#eab839"/><rect x="1184.07" y="536.5" width="2.1" height="0.6" fill="#b04a70"/><rect x="1187.16" y="476.5" width="2.1" height="60.1" fill="#6ba25e"/><rect x="1187.16" y="535.6" width="2.1" height="0.9" fill="#eab839"/><rect x="1187.16" y="536.5" width="2.1" height="0.6" fill="#b04a70"/><rect x="1190.25" y="478.1" width="2.1" height="58.5" fill="#6ba25e"/><rect x="1190.25" y="535.6" width="2.1" height="0.9" fill="#eab839"/><rect x="1190.25" y="536.5" width="2.1" height="0.6" fill="#b04a70"/><rect x="1193.34" y="479.0" width="2.1" height="57.6" fill="#6ba25e"/><rect x="1193.34" y="535.6" width="2.1" height="0.9" fill="#eab839"/><rect x="1193.34" y="536.5" width="2.1" height="0.6" fill="#b04a70"/><rect x="1196.42" y="479.0" width="2.1" height="57.6" fill="#6ba25e"/><rect x="1196.42" y="535.6" width="2.1" height="0.9" fill="#eab839"/><rect x="1196.42" y="536.5" width="2.1" height="0.6" fill="#b04a70"/><rect x="1199.51" y="478.8" width="2.1" height="57.9" fill="#6ba25e"/><rect x="1199.51" y="535.6" width="2.1" height="0.9" fill="#eab839"/><rect x="1199.51" y="536.5" width="2.1" height="0.6" fill="#b04a70"/><rect x="1202.60" y="479.4" width="2.1" height="57.2" fill="#6ba25e"/><rect x="1202.60" y="535.6" width="2.1" height="0.9" fill="#eab839"/><rect x="1202.60" y="536.5" width="2.1" height="0.6" fill="#b04a70"/><rect x="1205.69" y="480.0" width="2.1" height="56.6" fill="#6ba25e"/><rect x="1205.69" y="535.6" width="2.1" height="0.9" fill="#eab839"/><rect x="1205.69" y="536.5" width="2.1" height="0.6" fill="#b04a70"/><rect x="1208.78" y="480.0" width="2.1" height="56.6" fill="#6ba25e"/><rect x="1208.78" y="535.6" width="2.1" height="0.9" fill="#eab839"/><rect x="1208.78" y="536.5" width="2.1" height="0.6" fill="#b04a70"/><rect x="1211.86" y="481.0" width="2.1" height="55.6" fill="#6ba25e"/><rect x="1211.86" y="535.6" width="2.1" height="0.9" fill="#eab839"/><rect x="1211.86" y="536.5" width="2.1" height="0.6" fill="#b04a70"/><rect x="1214.95" y="480.6" width="2.1" height="56.0" fill="#6ba25e"/><rect x="1214.95" y="535.6" width="2.1" height="0.9" fill="#eab839"/><rect x="1214.95" y="536.5" width="2.1" height="0.6" fill="#b04a70"/><rect x="1218.04" y="481.0" width="2.1" height="55.6" fill="#6ba25e"/><rect x="1218.04" y="535.6" width="2.1" height="0.9" fill="#eab839"/><rect x="1218.04" y="536.5" width="2.1" height="0.6" fill="#b04a70"/><rect x="1221.13" y="480.6" width="2.1" height="56.0" fill="#6ba25e"/><rect x="1221.13" y="535.6" width="2.1" height="0.9" fill="#eab839"/><rect x="1221.13" y="536.5" width="2.1" height="0.6" fill="#b04a70"/><rect x="1224.22" y="481.0" width="2.1" height="55.6" fill="#6ba25e"/><rect x="1224.22" y="535.6" width="2.1" height="0.9" fill="#eab839"/><rect x="1224.22" y="536.5" width="2.1" height="0.6" fill="#b04a70"/><rect x="1227.30" y="481.9" width="2.1" height="54.7" fill="#6ba25e"/><rect x="1227.30" y="535.6" width="2.1" height="0.9" fill="#eab839"/><rect x="1227.30" y="536.5" width="2.1" height="0.6" fill="#b04a70"/><rect x="1230.39" y="477.8" width="2.1" height="58.9" fill="#6ba25e"/><rect x="1230.39" y="535.6" width="2.1" height="0.9" fill="#eab839"/><rect x="1230.39" y="536.5" width="2.1" height="0.6" fill="#b04a70"/><rect x="1233.48" y="477.2" width="2.1" height="59.4" fill="#6ba25e"/><rect x="1233.48" y="535.6" width="2.1" height="0.9" fill="#eab839"/><rect x="1233.48" y="536.5" width="2.1" height="0.6" fill="#b04a70"/><rect x="1236.57" y="477.2" width="2.1" height="59.4" fill="#6ba25e"/><rect x="1236.57" y="535.6" width="2.1" height="0.9" fill="#eab839"/><rect x="1236.57" y="536.5" width="2.1" height="0.6" fill="#b04a70"/><rect x="1239.66" y="478.1" width="2.1" height="58.5" fill="#6ba25e"/><rect x="1239.66" y="535.6" width="2.1" height="0.9" fill="#eab839"/><rect x="1239.66" y="536.5" width="2.1" height="0.6" fill="#b04a70"/><rect x="1242.74" y="478.1" width="2.1" height="58.5" fill="#6ba25e"/><rect x="1242.74" y="535.6" width="2.1" height="0.9" fill="#eab839"/><rect x="1242.74" y="536.5" width="2.1" height="0.6" fill="#b04a70"/><rect x="1245.83" y="478.5" width="2.1" height="58.1" fill="#6ba25e"/><rect x="1245.83" y="535.6" width="2.1" height="0.9" fill="#eab839"/><rect x="1245.83" y="536.5" width="2.1" height="0.6" fill="#b04a70"/><rect x="1248.92" y="478.5" width="2.1" height="58.1" fill="#6ba25e"/><rect x="1248.92" y="535.6" width="2.1" height="0.9" fill="#eab839"/><rect x="1248.92" y="536.5" width="2.1" height="0.6" fill="#b04a70"/><rect x="1252.01" y="479.0" width="2.1" height="57.6" fill="#6ba25e"/><rect x="1252.01" y="535.6" width="2.1" height="0.9" fill="#eab839"/><rect x="1252.01" y="536.5" width="2.1" height="0.6" fill="#b04a70"/><rect x="1255.10" y="479.4" width="2.1" height="57.2" fill="#6ba25e"/><rect x="1255.10" y="535.6" width="2.1" height="0.9" fill="#eab839"/><rect x="1255.10" y="536.5" width="2.1" height="0.6" fill="#b04a70"/><rect x="1258.18" y="481.0" width="2.1" height="55.6" fill="#6ba25e"/><rect x="1258.18" y="535.6" width="2.1" height="0.9" fill="#eab839"/><rect x="1258.18" y="536.5" width="2.1" height="0.6" fill="#b04a70"/><rect x="1261.27" y="481.5" width="2.1" height="55.1" fill="#6ba25e"/><rect x="1261.27" y="535.6" width="2.1" height="0.9" fill="#eab839"/><rect x="1261.27" y="536.5" width="2.1" height="0.6" fill="#b04a70"/><rect x="1264.36" y="480.2" width="2.1" height="56.4" fill="#6ba25e"/><rect x="1264.36" y="535.6" width="2.1" height="0.9" fill="#eab839"/><rect x="1264.36" y="536.5" width="2.1" height="0.6" fill="#b04a70"/><rect x="1267.45" y="481.5" width="2.1" height="55.1" fill="#6ba25e"/><rect x="1267.45" y="535.6" width="2.1" height="0.9" fill="#eab839"/><rect x="1267.45" y="536.5" width="2.1" height="0.6" fill="#b04a70"/><rect x="1270.54" y="481.0" width="2.1" height="55.6" fill="#6ba25e"/><rect x="1270.54" y="535.6" width="2.1" height="0.9" fill="#eab839"/><rect x="1270.54" y="536.5" width="2.1" height="0.6" fill="#b04a70"/><rect x="1273.62" y="477.2" width="2.1" height="59.4" fill="#6ba25e"/><rect x="1273.62" y="535.6" width="2.1" height="0.9" fill="#eab839"/><rect x="1273.62" y="536.5" width="2.1" height="0.6" fill="#b04a70"/><rect x="1276.71" y="476.2" width="2.1" height="60.4" fill="#6ba25e"/><rect x="1276.71" y="535.6" width="2.1" height="0.9" fill="#eab839"/><rect x="1276.71" y="536.5" width="2.1" height="0.6" fill="#b04a70"/><rect x="1279.80" y="478.1" width="2.1" height="58.5" fill="#6ba25e"/><rect x="1279.80" y="535.6" width="2.1" height="0.9" fill="#eab839"/><rect x="1279.80" y="536.5" width="2.1" height="0.6" fill="#b04a70"/><rect x="1282.89" y="478.1" width="2.1" height="58.5" fill="#6ba25e"/><rect x="1282.89" y="535.6" width="2.1" height="0.9" fill="#eab839"/><rect x="1282.89" y="536.5" width="2.1" height="0.6" fill="#b04a70"/><rect x="1285.98" y="478.5" width="2.1" height="58.1" fill="#6ba25e"/><rect x="1285.98" y="535.6" width="2.1" height="0.9" fill="#eab839"/><rect x="1285.98" y="536.5" width="2.1" height="0.6" fill="#b04a70"/><rect x="1289.06" y="478.8" width="2.1" height="57.9" fill="#6ba25e"/><rect x="1289.06" y="535.6" width="2.1" height="0.9" fill="#eab839"/><rect x="1289.06" y="536.5" width="2.1" height="0.6" fill="#b04a70"/><rect x="1292.15" y="479.0" width="2.1" height="57.6" fill="#6ba25e"/><rect x="1292.15" y="535.6" width="2.1" height="0.9" fill="#eab839"/><rect x="1292.15" y="536.5" width="2.1" height="0.6" fill="#b04a70"/><rect x="1295.24" y="478.5" width="2.1" height="58.1" fill="#6ba25e"/><rect x="1295.24" y="535.6" width="2.1" height="0.9" fill="#eab839"/><rect x="1295.24" y="536.5" width="2.1" height="0.6" fill="#b04a70"/><rect x="1298.33" y="479.8" width="2.1" height="56.9" fill="#6ba25e"/><rect x="1298.33" y="535.6" width="2.1" height="0.9" fill="#eab839"/><rect x="1298.33" y="536.5" width="2.1" height="0.6" fill="#b04a70"/><rect x="1301.42" y="480.0" width="2.1" height="56.6" fill="#6ba25e"/><rect x="1301.42" y="535.6" width="2.1" height="0.9" fill="#eab839"/><rect x="1301.42" y="536.5" width="2.1" height="0.6" fill="#b04a70"/><rect x="1304.50" y="480.2" width="2.1" height="56.4" fill="#6ba25e"/><rect x="1304.50" y="535.6" width="2.1" height="0.9" fill="#eab839"/><rect x="1304.50" y="536.5" width="2.1" height="0.6" fill="#b04a70"/><rect x="1307.59" y="480.6" width="2.1" height="56.0" fill="#6ba25e"/><rect x="1307.59" y="535.6" width="2.1" height="0.9" fill="#eab839"/><rect x="1307.59" y="536.5" width="2.1" height="0.6" fill="#b04a70"/><rect x="1310.68" y="481.0" width="2.1" height="55.6" fill="#6ba25e"/><rect x="1310.68" y="535.6" width="2.1" height="0.9" fill="#eab839"/><rect x="1310.68" y="536.5" width="2.1" height="0.6" fill="#b04a70"/><rect x="1313.77" y="481.0" width="2.1" height="55.6" fill="#6ba25e"/><rect x="1313.77" y="535.6" width="2.1" height="0.9" fill="#eab839"/><rect x="1313.77" y="536.5" width="2.1" height="0.6" fill="#b04a70"/><rect x="1316.86" y="481.0" width="2.1" height="55.6" fill="#6ba25e"/><rect x="1316.86" y="535.6" width="2.1" height="0.9" fill="#eab839"/><rect x="1316.86" y="536.5" width="2.1" height="0.6" fill="#b04a70"/><rect x="1319.94" y="476.0" width="2.1" height="60.6" fill="#6ba25e"/><rect x="1319.94" y="535.6" width="2.1" height="0.9" fill="#eab839"/><rect x="1319.94" y="536.5" width="2.1" height="0.6" fill="#b04a70"/><rect x="1323.03" y="476.9" width="2.1" height="59.7" fill="#6ba25e"/><rect x="1323.03" y="535.6" width="2.1" height="0.9" fill="#eab839"/><rect x="1323.03" y="536.5" width="2.1" height="0.6" fill="#b04a70"/><rect x="1326.12" y="477.8" width="2.1" height="58.9" fill="#6ba25e"/><rect x="1326.12" y="535.6" width="2.1" height="0.9" fill="#eab839"/><rect x="1326.12" y="536.5" width="2.1" height="0.6" fill="#b04a70"/><rect x="1329.21" y="477.8" width="2.1" height="58.9" fill="#6ba25e"/><rect x="1329.21" y="535.6" width="2.1" height="0.9" fill="#eab839"/><rect x="1329.21" y="536.5" width="2.1" height="0.6" fill="#b04a70"/><rect x="1332.30" y="478.1" width="2.1" height="58.5" fill="#6ba25e"/><rect x="1332.30" y="535.6" width="2.1" height="0.9" fill="#eab839"/><rect x="1332.30" y="536.5" width="2.1" height="0.6" fill="#b04a70"/><rect x="1335.38" y="478.5" width="2.1" height="58.1" fill="#6ba25e"/><rect x="1335.38" y="535.6" width="2.1" height="0.9" fill="#eab839"/><rect x="1335.38" y="536.5" width="2.1" height="0.6" fill="#b04a70"/><rect x="1338.47" y="478.8" width="2.1" height="57.9" fill="#6ba25e"/><rect x="1338.47" y="535.6" width="2.1" height="0.9" fill="#eab839"/><rect x="1338.47" y="536.5" width="2.1" height="0.6" fill="#b04a70"/><rect x="1341.56" y="480.0" width="2.1" height="56.6" fill="#6ba25e"/><rect x="1341.56" y="535.6" width="2.1" height="0.9" fill="#eab839"/><rect x="1341.56" y="536.5" width="2.1" height="0.6" fill="#b04a70"/><rect x="1344.65" y="481.0" width="2.1" height="55.6" fill="#6ba25e"/><rect x="1344.65" y="535.6" width="2.1" height="0.9" fill="#eab839"/><rect x="1344.65" y="536.5" width="2.1" height="0.6" fill="#b04a70"/><rect x="1347.74" y="479.0" width="2.1" height="57.6" fill="#6ba25e"/><rect x="1347.74" y="535.6" width="2.1" height="0.9" fill="#eab839"/><rect x="1347.74" y="536.5" width="2.1" height="0.6" fill="#b04a70"/><rect x="1350.82" y="480.0" width="2.1" height="56.6" fill="#6ba25e"/><rect x="1350.82" y="535.6" width="2.1" height="0.9" fill="#eab839"/><rect x="1350.82" y="536.5" width="2.1" height="0.6" fill="#b04a70"/><rect x="1353.91" y="480.6" width="2.1" height="56.0" fill="#6ba25e"/><rect x="1353.91" y="535.6" width="2.1" height="0.9" fill="#eab839"/><rect x="1353.91" y="536.5" width="2.1" height="0.6" fill="#b04a70"/><rect x="1357.00" y="481.5" width="2.1" height="55.1" fill="#6ba25e"/><rect x="1357.00" y="535.6" width="2.1" height="0.9" fill="#eab839"/><rect x="1357.00" y="536.5" width="2.1" height="0.6" fill="#b04a70"/><rect x="1360.09" y="480.0" width="2.1" height="56.6" fill="#6ba25e"/><rect x="1360.09" y="535.6" width="2.1" height="0.9" fill="#eab839"/><rect x="1360.09" y="536.5" width="2.1" height="0.6" fill="#b04a70"/><rect x="1363.18" y="477.2" width="2.1" height="59.4" fill="#6ba25e"/><rect x="1363.18" y="535.6" width="2.1" height="0.9" fill="#eab839"/><rect x="1363.18" y="536.5" width="2.1" height="0.6" fill="#b04a70"/><rect x="1366.26" y="476.5" width="2.1" height="60.1" fill="#6ba25e"/><rect x="1366.26" y="535.6" width="2.1" height="0.9" fill="#eab839"/><rect x="1366.26" y="536.5" width="2.1" height="0.6" fill="#b04a70"/><rect x="1369.35" y="478.5" width="2.1" height="58.1" fill="#6ba25e"/><rect x="1369.35" y="535.6" width="2.1" height="0.9" fill="#eab839"/><rect x="1369.35" y="536.5" width="2.1" height="0.6" fill="#b04a70"/><rect x="1372.44" y="477.5" width="2.1" height="59.1" fill="#6ba25e"/><rect x="1372.44" y="535.6" width="2.1" height="0.9" fill="#eab839"/><rect x="1372.44" y="536.5" width="2.1" height="0.6" fill="#b04a70"/><rect x="1375.53" y="478.1" width="2.1" height="58.5" fill="#6ba25e"/><rect x="1375.53" y="535.6" width="2.1" height="0.9" fill="#eab839"/><rect x="1375.53" y="536.5" width="2.1" height="0.6" fill="#b04a70"/><rect x="1378.62" y="479.0" width="2.1" height="57.6" fill="#6ba25e"/><rect x="1378.62" y="535.6" width="2.1" height="0.9" fill="#eab839"/><rect x="1378.62" y="536.5" width="2.1" height="0.6" fill="#b04a70"/><rect x="1381.70" y="478.5" width="2.1" height="58.1" fill="#6ba25e"/><rect x="1381.70" y="535.6" width="2.1" height="0.9" fill="#eab839"/><rect x="1381.70" y="536.5" width="2.1" height="0.6" fill="#b04a70"/><rect x="1384.79" y="478.8" width="2.1" height="57.9" fill="#6ba25e"/><rect x="1384.79" y="535.6" width="2.1" height="0.9" fill="#eab839"/><rect x="1384.79" y="536.5" width="2.1" height="0.6" fill="#b04a70"/><rect x="1387.88" y="480.2" width="2.1" height="56.4" fill="#6ba25e"/><rect x="1387.88" y="535.6" width="2.1" height="0.9" fill="#eab839"/><rect x="1387.88" y="536.5" width="2.1" height="0.6" fill="#b04a70"/><rect x="1390.97" y="481.0" width="2.1" height="55.6" fill="#6ba25e"/><rect x="1390.97" y="535.6" width="2.1" height="0.9" fill="#eab839"/><rect x="1390.97" y="536.5" width="2.1" height="0.6" fill="#b04a70"/><rect x="1394.06" y="480.2" width="2.1" height="56.4" fill="#6ba25e"/><rect x="1394.06" y="535.6" width="2.1" height="0.9" fill="#eab839"/><rect x="1394.06" y="536.5" width="2.1" height="0.6" fill="#b04a70"/><rect x="1397.14" y="481.9" width="2.1" height="54.7" fill="#6ba25e"/><rect x="1397.14" y="535.6" width="2.1" height="0.9" fill="#eab839"/><rect x="1397.14" y="536.5" width="2.1" height="0.6" fill="#b04a70"/><rect x="1400.23" y="480.0" width="2.1" height="56.6" fill="#6ba25e"/><rect x="1400.23" y="535.6" width="2.1" height="0.9" fill="#eab839"/><rect x="1400.23" y="536.5" width="2.1" height="0.6" fill="#b04a70"/><rect x="1403.32" y="477.8" width="2.1" height="58.9" fill="#6ba25e"/><rect x="1403.32" y="535.6" width="2.1" height="0.9" fill="#eab839"/><rect x="1403.32" y="536.5" width="2.1" height="0.6" fill="#b04a70"/><rect x="1406.41" y="476.9" width="2.1" height="59.7" fill="#6ba25e"/><rect x="1406.41" y="535.6" width="2.1" height="0.9" fill="#eab839"/><rect x="1406.41" y="536.5" width="2.1" height="0.6" fill="#b04a70"/><rect x="1409.50" y="477.8" width="2.1" height="58.9" fill="#6ba25e"/><rect x="1409.50" y="535.6" width="2.1" height="0.9" fill="#eab839"/><rect x="1409.50" y="536.5" width="2.1" height="0.6" fill="#b04a70"/><rect x="1412.58" y="478.1" width="2.1" height="58.5" fill="#6ba25e"/><rect x="1412.58" y="535.6" width="2.1" height="0.9" fill="#eab839"/><rect x="1412.58" y="536.5" width="2.1" height="0.6" fill="#b04a70"/><rect x="1415.67" y="478.1" width="2.1" height="58.5" fill="#6ba25e"/><rect x="1415.67" y="535.6" width="2.1" height="0.9" fill="#eab839"/><rect x="1415.67" y="536.5" width="2.1" height="0.6" fill="#b04a70"/><rect x="1418.76" y="479.0" width="2.1" height="57.6" fill="#6ba25e"/><rect x="1418.76" y="535.6" width="2.1" height="0.9" fill="#eab839"/><rect x="1418.76" y="536.5" width="2.1" height="0.6" fill="#b04a70"/><rect x="1421.85" y="478.5" width="2.1" height="58.1" fill="#6ba25e"/><rect x="1421.85" y="535.6" width="2.1" height="0.9" fill="#eab839"/><rect x="1421.85" y="536.5" width="2.1" height="0.6" fill="#b04a70"/><rect x="1424.94" y="478.8" width="2.1" height="57.9" fill="#6ba25e"/><rect x="1424.94" y="535.6" width="2.1" height="0.9" fill="#eab839"/><rect x="1424.94" y="536.5" width="2.1" height="0.6" fill="#b04a70"/><rect x="1428.02" y="480.0" width="2.1" height="56.6" fill="#6ba25e"/><rect x="1428.02" y="535.6" width="2.1" height="0.9" fill="#eab839"/><rect x="1428.02" y="536.5" width="2.1" height="0.6" fill="#b04a70"/><rect x="1431.11" y="480.6" width="2.1" height="56.0" fill="#6ba25e"/><rect x="1431.11" y="535.6" width="2.1" height="0.9" fill="#eab839"/><rect x="1431.11" y="536.5" width="2.1" height="0.6" fill="#b04a70"/><rect x="1434.20" y="481.0" width="2.1" height="55.6" fill="#6ba25e"/><rect x="1434.20" y="535.6" width="2.1" height="0.9" fill="#eab839"/><rect x="1434.20" y="536.5" width="2.1" height="0.6" fill="#b04a70"/><rect x="1437.29" y="480.2" width="2.1" height="56.4" fill="#6ba25e"/><rect x="1437.29" y="535.6" width="2.1" height="0.9" fill="#eab839"/><rect x="1437.29" y="536.5" width="2.1" height="0.6" fill="#b04a70"/><rect x="1440.38" y="480.0" width="2.1" height="56.6" fill="#6ba25e"/><rect x="1440.38" y="535.6" width="2.1" height="0.9" fill="#eab839"/><rect x="1440.38" y="536.5" width="2.1" height="0.6" fill="#b04a70"/><rect x="1443.46" y="476.2" width="2.1" height="60.4" fill="#6ba25e"/><rect x="1443.46" y="535.6" width="2.1" height="0.9" fill="#eab839"/><rect x="1443.46" y="536.5" width="2.1" height="0.6" fill="#b04a70"/><rect x="1446.55" y="476.5" width="2.1" height="60.1" fill="#6ba25e"/><rect x="1446.55" y="535.6" width="2.1" height="0.9" fill="#eab839"/><rect x="1446.55" y="536.5" width="2.1" height="0.6" fill="#b04a70"/><rect x="1449.64" y="477.0" width="2.1" height="59.6" fill="#6ba25e"/><rect x="1449.64" y="535.6" width="2.1" height="0.9" fill="#eab839"/><rect x="1449.64" y="536.5" width="2.1" height="0.6" fill="#b04a70"/><rect x="1452.73" y="478.0" width="2.1" height="58.6" fill="#6ba25e"/><rect x="1452.73" y="535.6" width="2.1" height="0.9" fill="#eab839"/><rect x="1452.73" y="536.5" width="2.1" height="0.6" fill="#b04a70"/><rect x="1455.82" y="477.8" width="2.1" height="58.8" fill="#6ba25e"/><rect x="1455.82" y="535.6" width="2.1" height="0.9" fill="#eab839"/><rect x="1455.82" y="536.5" width="2.1" height="0.6" fill="#b04a70"/><rect x="1458.90" y="478.5" width="2.1" height="58.1" fill="#6ba25e"/><rect x="1458.90" y="535.6" width="2.1" height="0.9" fill="#eab839"/><rect x="1458.90" y="536.5" width="2.1" height="0.6" fill="#b04a70"/><rect x="1461.99" y="478.2" width="2.1" height="58.4" fill="#6ba25e"/><rect x="1461.99" y="535.6" width="2.1" height="0.9" fill="#eab839"/><rect x="1461.99" y="536.5" width="2.1" height="0.6" fill="#b04a70"/><rect x="1465.08" y="479.2" width="2.1" height="57.4" fill="#6ba25e"/><rect x="1465.08" y="535.6" width="2.1" height="0.9" fill="#eab839"/><rect x="1465.08" y="536.5" width="2.1" height="0.6" fill="#b04a70"/><rect x="1468.17" y="480.0" width="2.1" height="56.6" fill="#6ba25e"/><rect x="1468.17" y="535.6" width="2.1" height="0.9" fill="#eab839"/><rect x="1468.17" y="536.5" width="2.1" height="0.6" fill="#b04a70"/><rect x="1471.26" y="480.0" width="2.1" height="56.6" fill="#6ba25e"/><rect x="1471.26" y="535.6" width="2.1" height="0.9" fill="#eab839"/><rect x="1471.26" y="536.5" width="2.1" height="0.6" fill="#b04a70"/><rect x="1474.34" y="481.0" width="2.1" height="55.6" fill="#6ba25e"/><rect x="1474.34" y="535.6" width="2.1" height="0.9" fill="#eab839"/><rect x="1474.34" y="536.5" width="2.1" height="0.6" fill="#b04a70"/><rect x="1477.43" y="481.8" width="2.1" height="54.8" fill="#6ba25e"/><rect x="1477.43" y="535.6" width="2.1" height="0.9" fill="#eab839"/><rect x="1477.43" y="536.5" width="2.1" height="0.6" fill="#b04a70"/><rect x="1480.52" y="479.8" width="2.1" height="56.8" fill="#6ba25e"/><rect x="1480.52" y="535.6" width="2.1" height="0.9" fill="#eab839"/><rect x="1480.52" y="536.5" width="2.1" height="0.6" fill="#b04a70"/><rect x="1483.61" y="478.8" width="2.1" height="57.8" fill="#6ba25e"/><rect x="1483.61" y="535.6" width="2.1" height="0.9" fill="#eab839"/><rect x="1483.61" y="536.5" width="2.1" height="0.6" fill="#b04a70"/><rect x="1486.70" y="477.0" width="2.1" height="59.6" fill="#6ba25e"/><rect x="1486.70" y="535.6" width="2.1" height="0.9" fill="#eab839"/><rect x="1486.70" y="536.5" width="2.1" height="0.6" fill="#b04a70"/><rect x="1489.78" y="478.0" width="2.1" height="58.6" fill="#6ba25e"/><rect x="1489.78" y="535.6" width="2.1" height="0.9" fill="#eab839"/><rect x="1489.78" y="536.5" width="2.1" height="0.6" fill="#b04a70"/><rect x="1492.87" y="477.2" width="2.1" height="59.4" fill="#6ba25e"/><rect x="1492.87" y="535.6" width="2.1" height="0.9" fill="#eab839"/><rect x="1492.87" y="536.5" width="2.1" height="0.6" fill="#b04a70"/><rect x="1495.96" y="477.8" width="2.1" height="58.8" fill="#6ba25e"/><rect x="1495.96" y="535.6" width="2.1" height="0.9" fill="#eab839"/><rect x="1495.96" y="536.5" width="2.1" height="0.6" fill="#b04a70"/><rect x="1499.05" y="478.5" width="2.1" height="58.1" fill="#6ba25e"/><rect x="1499.05" y="535.6" width="2.1" height="0.9" fill="#eab839"/><rect x="1499.05" y="536.5" width="2.1" height="0.6" fill="#b04a70"/><rect x="1502.14" y="478.5" width="2.1" height="58.1" fill="#6ba25e"/><rect x="1502.14" y="535.6" width="2.1" height="0.9" fill="#eab839"/><rect x="1502.14" y="536.5" width="2.1" height="0.6" fill="#b04a70"/><rect x="1505.22" y="479.2" width="2.1" height="57.4" fill="#6ba25e"/><rect x="1505.22" y="535.6" width="2.1" height="0.9" fill="#eab839"/><rect x="1505.22" y="536.5" width="2.1" height="0.6" fill="#b04a70"/><rect x="1508.31" y="479.2" width="2.1" height="57.4" fill="#6ba25e"/><rect x="1508.31" y="535.6" width="2.1" height="0.9" fill="#eab839"/><rect x="1508.31" y="536.5" width="2.1" height="0.6" fill="#b04a70"/><rect x="1511.40" y="479.2" width="2.1" height="57.4" fill="#6ba25e"/><rect x="1511.40" y="535.6" width="2.1" height="0.9" fill="#eab839"/><rect x="1511.40" y="536.5" width="2.1" height="0.6" fill="#b04a70"/><rect x="1514.49" y="480.0" width="2.1" height="56.6" fill="#6ba25e"/><rect x="1514.49" y="535.6" width="2.1" height="0.9" fill="#eab839"/><rect x="1514.49" y="536.5" width="2.1" height="0.6" fill="#b04a70"/><rect x="1517.58" y="480.0" width="2.1" height="56.6" fill="#6ba25e"/><rect x="1517.58" y="535.6" width="2.1" height="0.9" fill="#eab839"/><rect x="1517.58" y="536.5" width="2.1" height="0.6" fill="#b04a70"/><rect x="1520.66" y="480.5" width="2.1" height="56.1" fill="#6ba25e"/><rect x="1520.66" y="535.6" width="2.1" height="0.9" fill="#eab839"/><rect x="1520.66" y="536.5" width="2.1" height="0.6" fill="#b04a70"/><rect x="1523.75" y="480.0" width="2.1" height="56.6" fill="#6ba25e"/><rect x="1523.75" y="535.6" width="2.1" height="0.9" fill="#eab839"/><rect x="1523.75" y="536.5" width="2.1" height="0.6" fill="#b04a70"/><rect x="1526.84" y="479.2" width="2.1" height="57.4" fill="#6ba25e"/><rect x="1526.84" y="535.6" width="2.1" height="0.9" fill="#eab839"/><rect x="1526.84" y="536.5" width="2.1" height="0.6" fill="#b04a70"/><rect x="1529.93" y="476.2" width="2.1" height="60.4" fill="#6ba25e"/><rect x="1529.93" y="535.6" width="2.1" height="0.9" fill="#eab839"/><rect x="1529.93" y="536.5" width="2.1" height="0.6" fill="#b04a70"/><rect x="1533.02" y="477.0" width="2.1" height="59.6" fill="#6ba25e"/><rect x="1533.02" y="535.6" width="2.1" height="0.9" fill="#eab839"/><rect x="1533.02" y="536.5" width="2.1" height="0.6" fill="#b04a70"/><rect x="1536.10" y="477.2" width="2.1" height="59.4" fill="#6ba25e"/><rect x="1536.10" y="535.6" width="2.1" height="0.9" fill="#eab839"/><rect x="1536.10" y="536.5" width="2.1" height="0.6" fill="#b04a70"/><rect x="1539.19" y="478.5" width="2.1" height="58.1" fill="#6ba25e"/><rect x="1539.19" y="535.6" width="2.1" height="0.9" fill="#eab839"/><rect x="1539.19" y="536.5" width="2.1" height="0.6" fill="#b04a70"/><rect x="1542.28" y="477.2" width="2.1" height="59.4" fill="#6ba25e"/><rect x="1542.28" y="535.6" width="2.1" height="0.9" fill="#eab839"/><rect x="1542.28" y="536.5" width="2.1" height="0.6" fill="#b04a70"/><rect x="1545.37" y="478.5" width="2.1" height="58.1" fill="#6ba25e"/><rect x="1545.37" y="535.6" width="2.1" height="0.9" fill="#eab839"/><rect x="1545.37" y="536.5" width="2.1" height="0.6" fill="#b04a70"/><rect x="1548.46" y="478.8" width="2.1" height="57.8" fill="#6ba25e"/><rect x="1548.46" y="535.6" width="2.1" height="0.9" fill="#eab839"/><rect x="1548.46" y="536.5" width="2.1" height="0.6" fill="#b04a70"/><rect x="1551.54" y="479.5" width="2.1" height="57.1" fill="#6ba25e"/><rect x="1551.54" y="535.6" width="2.1" height="0.9" fill="#eab839"/><rect x="1551.54" y="536.5" width="2.1" height="0.6" fill="#b04a70"/><rect x="1554.63" y="479.5" width="2.1" height="57.1" fill="#6ba25e"/><rect x="1554.63" y="535.6" width="2.1" height="0.9" fill="#eab839"/><rect x="1554.63" y="536.5" width="2.1" height="0.6" fill="#b04a70"/><rect x="1557.72" y="479.5" width="2.1" height="57.1" fill="#6ba25e"/><rect x="1557.72" y="535.6" width="2.1" height="0.9" fill="#eab839"/><rect x="1557.72" y="536.5" width="2.1" height="0.6" fill="#b04a70"/><rect x="1560.81" y="479.8" width="2.1" height="56.8" fill="#6ba25e"/><rect x="1560.81" y="535.6" width="2.1" height="0.9" fill="#eab839"/><rect x="1560.81" y="536.5" width="2.1" height="0.6" fill="#b04a70"/><rect x="1563.90" y="480.5" width="2.1" height="56.1" fill="#6ba25e"/><rect x="1563.90" y="535.6" width="2.1" height="0.9" fill="#eab839"/><rect x="1563.90" y="536.5" width="2.1" height="0.6" fill="#b04a70"/><rect x="1566.98" y="479.8" width="2.1" height="56.8" fill="#6ba25e"/><rect x="1566.98" y="535.6" width="2.1" height="0.9" fill="#eab839"/><rect x="1566.98" y="536.5" width="2.1" height="0.6" fill="#b04a70"/><rect x="1570.07" y="478.8" width="2.1" height="57.8" fill="#6ba25e"/><rect x="1570.07" y="535.6" width="2.1" height="0.9" fill="#eab839"/><rect x="1570.07" y="536.5" width="2.1" height="0.6" fill="#b04a70"/><rect x="1573.16" y="476.2" width="2.1" height="60.4" fill="#6ba25e"/><rect x="1573.16" y="535.6" width="2.1" height="0.9" fill="#eab839"/><rect x="1573.16" y="536.5" width="2.1" height="0.6" fill="#b04a70"/></svg>
<div class="a" style="left:18.3px;width:60px;text-align:center;top:539.6px;height:12px;line-height:12px;color:#ccccdc;font-size:8.5px;">05/29 00:00</div>
<div class="a" style="left:92.4px;width:60px;text-align:center;top:539.6px;height:12px;line-height:12px;color:#ccccdc;font-size:8.5px;">05/30 00:00</div>
<div class="a" style="left:166.5px;width:60px;text-align:center;top:539.6px;height:12px;line-height:12px;color:#ccccdc;font-size:8.5px;">05/31 00:00</div>
<div class="a" style="left:240.6px;width:60px;text-align:center;top:539.6px;height:12px;line-height:12px;color:#ccccdc;font-size:8.5px;">06/01 00:00</div>
<div class="a" style="left:314.7px;width:60px;text-align:center;top:539.6px;height:12px;line-height:12px;color:#ccccdc;font-size:8.5px;">06/02 00:00</div>
<div class="a" style="left:388.8px;width:60px;text-align:center;top:539.6px;height:12px;line-height:12px;color:#ccccdc;font-size:8.5px;">06/03 00:00</div>
<div class="a" style="left:462.8px;width:60px;text-align:center;top:539.6px;height:12px;line-height:12px;color:#ccccdc;font-size:8.5px;">06/04 00:00</div>
<div class="a" style="left:536.9px;width:60px;text-align:center;top:539.6px;height:12px;line-height:12px;color:#ccccdc;font-size:8.5px;">06/05 00:00</div>
<div class="a" style="left:611.0px;width:60px;text-align:center;top:539.6px;height:12px;line-height:12px;color:#ccccdc;font-size:8.5px;">06/06 00:00</div>
<div class="a" style="left:685.1px;width:60px;text-align:center;top:539.6px;height:12px;line-height:12px;color:#ccccdc;font-size:8.5px;">06/07 00:00</div>
<div class="a" style="left:759.2px;width:60px;text-align:center;top:539.6px;height:12px;line-height:12px;color:#ccccdc;font-size:8.5px;">06/08 00:00</div>
<div class="a" style="left:833.3px;width:60px;text-align:center;top:539.6px;height:12px;line-height:12px;color:#ccccdc;font-size:8.5px;">06/09 00:00</div>
<div class="a" style="left:907.4px;width:60px;text-align:center;top:539.6px;height:12px;line-height:12px;color:#ccccdc;font-size:8.5px;">06/10 00:00</div>
<div class="a" style="left:981.5px;width:60px;text-align:center;top:539.6px;height:12px;line-height:12px;color:#ccccdc;font-size:8.5px;">06/11 00:00</div>
<div class="a" style="left:1055.6px;width:60px;text-align:center;top:539.6px;height:12px;line-height:12px;color:#ccccdc;font-size:8.5px;">06/12 00:00</div>
<div class="a" style="left:1129.7px;width:60px;text-align:center;top:539.6px;height:12px;line-height:12px;color:#ccccdc;font-size:8.5px;">06/13 00:00</div>
<div class="a" style="left:1203.7px;width:60px;text-align:center;top:539.6px;height:12px;line-height:12px;color:#ccccdc;font-size:8.5px;">06/14 00:00</div>
<div class="a" style="left:1277.8px;width:60px;text-align:center;top:539.6px;height:12px;line-height:12px;color:#ccccdc;font-size:8.5px;">06/15 00:00</div>
<div class="a" style="left:1351.9px;width:60px;text-align:center;top:539.6px;height:12px;line-height:12px;color:#ccccdc;font-size:8.5px;">06/16 00:00</div>
<div class="a" style="left:1426.0px;width:60px;text-align:center;top:539.6px;height:12px;line-height:12px;color:#ccccdc;font-size:8.5px;">06/17 00:00</div>
<div class="a" style="left:1500.1px;width:60px;text-align:center;top:539.6px;height:12px;line-height:12px;color:#ccccdc;font-size:8.5px;">06/18 00:00</div>
<div class="a" style="left:25.3px;top:559px;width:8.5px;height:2px;background:#705da0;border-radius:1px;"></div>
<div class="a" style="left:38.8px;top:554px;height:12px;line-height:12px;color:rgba(204,204,220,0.85);font-size:8px;">critical</div>
<div class="a" style="left:68.8px;top:554px;height:12px;line-height:12px;color:rgba(204,204,220,0.85);font-size:8px;">Total: 0</div>
<div class="a" style="left:101.8px;top:559px;width:8.5px;height:2px;background:#e24d42;border-radius:1px;"></div>
<div class="a" style="left:115.9px;top:554px;height:12px;line-height:12px;color:rgba(204,204,220,0.85);font-size:8px;">error</div>
<div class="a" style="left:139.1px;top:554px;height:12px;line-height:12px;color:rgba(204,204,220,0.85);font-size:8px;">Total: 255 K</div>
<div class="a" style="left:189px;top:559px;width:8.5px;height:2px;background:#eab839;border-radius:1px;"></div>
<div class="a" style="left:202.9px;top:554px;height:12px;line-height:12px;color:rgba(204,204,220,0.85);font-size:8px;">warning</div>
<div class="a" style="left:237.6px;top:554px;height:12px;line-height:12px;color:rgba(204,204,220,0.85);font-size:8px;">Total: 25.4 K</div>
<div class="a" style="left:289.3px;top:559px;width:8.5px;height:2px;background:#7eb26d;border-radius:1px;"></div>
<div class="a" style="left:303px;top:554px;height:12px;line-height:12px;color:rgba(204,204,220,0.85);font-size:8px;">info</div>
<div class="a" style="left:322.4px;top:554px;height:12px;line-height:12px;color:rgba(204,204,220,0.85);font-size:8px;">Total: 12.3 Mil</div>
<div class="a" style="left:379px;top:559px;width:8.5px;height:2px;background:#1f78c1;border-radius:1px;"></div>
<div class="a" style="left:392px;top:554px;height:12px;line-height:12px;color:rgba(204,204,220,0.85);font-size:8px;">debug</div>
<div class="a" style="left:420.6px;top:554px;height:12px;line-height:12px;color:rgba(204,204,220,0.85);font-size:8px;">Total: 0</div>
<div class="a" style="left:454px;top:559px;width:8.5px;height:2px;background:#6ed0e0;border-radius:1px;"></div>
<div class="a" style="left:467.6px;top:554px;height:12px;line-height:12px;color:rgba(204,204,220,0.85);font-size:8px;">trace</div>
<div class="a" style="left:491.6px;top:554px;height:12px;line-height:12px;color:rgba(204,204,220,0.85);font-size:8px;">Total: 0</div>
<div class="a" style="left:525px;top:559px;width:8.5px;height:2px;background:#8e8e8e;border-radius:1px;"></div>
<div class="a" style="left:538.6px;top:554px;height:12px;line-height:12px;color:rgba(204,204,220,0.85);font-size:8px;">unknown</div>
<div class="a" style="left:577px;top:554px;height:12px;line-height:12px;color:rgba(204,204,220,0.85);font-size:8px;">Total: 0</div>
<div class="a" style="left:9px;top:570px;width:1586px;height:1px;background:rgba(204,204,220,0.12);"></div>
<div class="a" style="left:13.5px;top:576px;height:12px;line-height:12px;color:#ccccdc;font-size:9.5px;font-weight:400;-webkit-text-stroke:0.35px currentColor">Logs</div>
<svg class="a" style="left:44.5px;top:577px" width="10" height="10" viewBox="0 0 10 10"><path d="M1 1.5 H9 V7 H4.5 L2.5 9 V7 H1 Z" fill="none" stroke="rgba(204,204,220,0.65)" stroke-width="0.9"/><path d="M2.8 3.6 H7.2 M2.8 5.2 H6" stroke="rgba(204,204,220,0.65)" stroke-width="0.8"/></svg>
<div class="a" style="left:56.8px;top:576px;height:12px;line-height:12px;color:rgba(204,204,220,0.65);font-size:7.9px;">Give feedback</div>
<div class="a" style="left:1528px;top:575px;width:62.5px;height:14px;border:1px solid rgba(204,204,220,0.14);border-radius:2px;box-sizing:border-box;background:#191b1f;"></div><div class="a val" style="left:1535.5px;top:575.3px;height:14px;line-height:14px;color:rgba(204,204,220,0.65);font-size:8.1px">Logs</div><div class="a" style="left:1559px;top:577px;width:29.5px;height:10px;background:#2b2d32;border-radius:2px;"></div><div class="a val" style="left:1564px;top:575.3px;height:14px;line-height:14px;color:#ccccdc;font-weight:400;-webkit-text-stroke:0.35px currentColor;font-size:8.2px">Table</div>
<div class="a" style="left:1507px;top:597.5px;width:84px;height:19px;background:#292b30;border:1px solid rgba(204,204,220,0.06);box-sizing:border-box;border-radius:2px;"></div>
<svg class="a" style="left:1513px;top:602px" width="10" height="10" viewBox="0 0 10 10"><path d="M3 4 H1.2 V9 H8.8 V4 H7" fill="none" stroke="#ccccdc" stroke-width="0.9"/><path d="M5 0.8 V6.2 M3.2 4.5 L5 6.2 L6.8 4.5" fill="none" stroke="#ccccdc" stroke-width="0.9"/></svg>
<div class="a" style="left:1529px;top:596.8px;height:19px;line-height:19px;color:#ccccdc;font-size:9.65px;font-weight:400;-webkit-text-stroke:0.35px currentColor">Download</div>
<svg class="a" style="left:1575px;top:604.5px" width="8" height="6" viewBox="0 0 8 6"><path d="M2 2 L4 4 L6 2" fill="none" stroke="#ccccdc" stroke-width="1.15" stroke-linecap="round" stroke-linejoin="round"/></svg>
<div class="a" style="left:15.5px;top:618.5px;width:120.5px;height:20px;background:#111217;border:1px solid rgba(204,204,220,0.15);border-radius:2px;box-sizing:border-box;"></div>
<div class="a" style="left:21.5px;top:618.5px;height:20px;line-height:20px;color:rgba(204,204,220,0.55);font-size:9.3px;">Search fields by name</div>
<div class="a" style="left:13px;top:651px;width:123px;height:21px;background:#22252b;"></div>
<div class="a" style="left:21px;top:651px;height:21px;line-height:21px;color:#ccccdc;font-size:9.6px;">Selected fields</div>
<div class="a" style="left:111.5px;top:651px;height:21px;line-height:21px;color:rgba(204,204,220,0.65);font-size:6.8px;font-weight:700">Reset</div>
<div class="a" style="left:16px;top:683px;width:10px;height:10px;background:#3d71d9;border-radius:1.5px;"></div><svg class="a" style="left:16px;top:683px" width="10" height="10" viewBox="0 0 10 10"><path d="M2 5.2 L4.1 7.2 L8 2.8" fill="none" stroke="#fff" stroke-width="1.3"/></svg>
<div class="a" style="left:30.5px;top:682px;height:12px;line-height:12px;color:#ccccdc;font-size:8.5px;font-weight:400;-webkit-text-stroke:0.35px currentColor">timestamp</div>
<div class="a" style="left:16px;top:699.5px;width:10px;height:10px;background:#3d71d9;border-radius:1.5px;"></div><svg class="a" style="left:16px;top:699.5px" width="10" height="10" viewBox="0 0 10 10"><path d="M2 5.2 L4.1 7.2 L8 2.8" fill="none" stroke="#fff" stroke-width="1.3"/></svg>
<div class="a" style="left:30.5px;top:698.5px;height:12px;line-height:12px;color:#ccccdc;font-size:8.5px;font-weight:400;-webkit-text-stroke:0.35px currentColor">body</div>
<svg class="a" style="left:127px;top:683px" width="7" height="10" viewBox="0 0 7 10"><circle cx="1.5" cy="1.8" r="0.85" fill="rgba(204,204,220,0.45)"/><circle cx="1.5" cy="5" r="0.85" fill="rgba(204,204,220,0.45)"/><circle cx="1.5" cy="8.2" r="0.85" fill="rgba(204,204,220,0.45)"/><circle cx="5" cy="1.8" r="0.85" fill="rgba(204,204,220,0.45)"/><circle cx="5" cy="5" r="0.85" fill="rgba(204,204,220,0.45)"/><circle cx="5" cy="8.2" r="0.85" fill="rgba(204,204,220,0.45)"/></svg>
<svg class="a" style="left:127px;top:699.5px" width="7" height="10" viewBox="0 0 7 10"><circle cx="1.5" cy="1.8" r="0.85" fill="rgba(204,204,220,0.45)"/><circle cx="1.5" cy="5" r="0.85" fill="rgba(204,204,220,0.45)"/><circle cx="1.5" cy="8.2" r="0.85" fill="rgba(204,204,220,0.45)"/><circle cx="5" cy="1.8" r="0.85" fill="rgba(204,204,220,0.45)"/><circle cx="5" cy="5" r="0.85" fill="rgba(204,204,220,0.45)"/><circle cx="5" cy="8.2" r="0.85" fill="rgba(204,204,220,0.45)"/></svg>
<div class="a" style="left:13px;top:718px;width:123px;height:21px;background:#22252b;"></div>
<div class="a" style="left:21px;top:718px;height:21px;line-height:21px;color:#ccccdc;font-size:9.6px;">Fields</div>
<div class="a" style="left:16px;top:750.5px;width:10px;height:10px;background:#111217;border:1px solid rgba(204,204,220,0.18);border-radius:1.5px;box-sizing:border-box;"></div>
<div class="a" style="left:30.5px;top:749.5px;height:12px;line-height:12px;color:#ccccdc;font-size:8.5px;font-weight:400;-webkit-text-stroke:0.35px currentColor">level</div>
<div class="a" style="left:111.5px;top:749.5px;height:12px;line-height:12px;color:rgba(204,204,220,0.65);font-size:7px;">100%</div>
<div class="a" style="left:16px;top:767.5px;width:10px;height:10px;background:#111217;border:1px solid rgba(204,204,220,0.18);border-radius:1.5px;box-sizing:border-box;"></div>
<div class="a" style="left:30.5px;top:766.5px;height:12px;line-height:12px;color:#ccccdc;font-size:8.5px;font-weight:400;-webkit-text-stroke:0.35px currentColor">traceID</div>
<div class="a" style="left:111.5px;top:766.5px;height:12px;line-height:12px;color:rgba(204,204,220,0.65);font-size:7px;">100%</div>
<div class="a" style="left:142.5px;top:767px;width:3.5px;height:70px;background:#2a2d33;border-radius:2px;"></div>
<div class="a" style="left:155.5px;top:620px;height:12px;line-height:12px;color:#ccccdc;font-size:9.6px;font-weight:400;-webkit-text-stroke:0.35px currentColor">timestamp</div>
<svg class="a" style="left:205px;top:621px" width="8" height="10" viewBox="0 0 8 10"><path d="M4 1.5 V8 M1.8 5.8 L4 8 L6.2 5.8" fill="none" stroke="#ccccdc" stroke-width="1"/></svg>
<svg class="a" style="left:217px;top:621px" width="10" height="10" viewBox="0 0 10 10"><path d="M1 1.5 H9 L6 5 V8.8 L4 7.8 V5 Z" fill="none" stroke="rgba(204,204,220,0.65)" stroke-width="0.9" stroke-linejoin="round"/></svg>
<div class="a" style="left:281.5px;top:620px;height:12px;line-height:12px;color:#ccccdc;font-size:9.6px;font-weight:400;-webkit-text-stroke:0.35px currentColor">body</div>
<svg class="a" style="left:305.5px;top:621px" width="10" height="10" viewBox="0 0 10 10"><path d="M1 1.5 H9 L6 5 V8.8 L4 7.8 V5 Z" fill="none" stroke="rgba(204,204,220,0.65)" stroke-width="0.9" stroke-linejoin="round"/></svg>
<div class="a" style="left:152px;top:635px;width:1390px;height:1px;background:rgba(204,204,220,0.08);"></div>
<div class="a sx" style="left:155.5px;top:641.7px;height:12px;line-height:12px;color:#ccccdc;font-size:10.2px;transform:scaleX(0.925)">2024-06-18 14:51:08</div>
<div class="a sx" style="left:281.5px;top:641.7px;height:12px;line-height:12px;color:#ccccdc;font-size:10.2px;transform:scaleX(0.925)">Receive ListRecommendations for product ids:['L9ECAV7KIM', '9SIQT8TOJO', '6E92ZMYYFZ', '1YMWWN1N4O', 'LS4PSXUNUM']</div>
<div class="a" style="left:152px;top:657.4px;width:1390px;height:1px;background:rgba(204,204,220,0.08);"></div>
<div class="a sx" style="left:155.5px;top:664.3px;height:12px;line-height:12px;color:#ccccdc;font-size:10.2px;transform:scaleX(0.925)">2024-06-18 14:51:08</div>
<div class="a sx" style="left:281.5px;top:664.3px;height:12px;line-height:12px;color:#ccccdc;font-size:10.2px;transform:scaleX(0.925)">GetCartAsync called with userId={userId}</div>
<div class="a" style="left:152px;top:680.0px;width:1390px;height:1px;background:rgba(204,204,220,0.08);"></div>
<div class="a sx" style="left:155.5px;top:686.8px;height:12px;line-height:12px;color:#ccccdc;font-size:10.2px;transform:scaleX(0.925)">2024-06-18 14:51:08</div>
<div class="a sx" style="left:281.5px;top:686.8px;height:12px;line-height:12px;color:#ccccdc;font-size:10.2px;transform:scaleX(0.925)">GetCartAsync called with userId={userId}</div>
<div class="a" style="left:152px;top:702.5px;width:1390px;height:1px;background:rgba(204,204,220,0.08);"></div>
<div class="a sx" style="left:155.5px;top:709.4px;height:12px;line-height:12px;color:#ccccdc;font-size:10.2px;transform:scaleX(0.925)">2024-06-18 14:51:08</div>
<div class="a sx" style="left:281.5px;top:709.4px;height:12px;line-height:12px;color:#ccccdc;font-size:10.2px;transform:scaleX(0.925)">Receive ListRecommendations for product ids:['OLJCESPC7Z', 'HQTGWGPNH4', '9SIQT8TOJO', '0PUK6V6EV0', '2ZYFJ3GM2N']</div>
<div class="a" style="left:152px;top:725.1px;width:1390px;height:1px;background:rgba(204,204,220,0.08);"></div>
<div class="a sx" style="left:155.5px;top:732.0px;height:12px;line-height:12px;color:#ccccdc;font-size:10.2px;transform:scaleX(0.925)">2024-06-18 14:51:08</div>
<div class="a sx" style="left:281.5px;top:732.0px;height:12px;line-height:12px;color:#ccccdc;font-size:10.2px;transform:scaleX(0.925)">GetCartAsync called with userId={userId}</div>
<div class="a" style="left:152px;top:747.7px;width:1390px;height:1px;background:rgba(204,204,220,0.08);"></div>
<div class="a sx" style="left:155.5px;top:754.6px;height:12px;line-height:12px;color:#ccccdc;font-size:10.2px;transform:scaleX(0.925)">2024-06-18 14:51:08</div>
<div class="a sx" style="left:281.5px;top:754.6px;height:12px;line-height:12px;color:#ccccdc;font-size:10.2px;transform:scaleX(0.925)">GetCartAsync called with userId={userId}</div>
<div class="a" style="left:152px;top:770.2px;width:1390px;height:1px;background:rgba(204,204,220,0.08);"></div>
<div class="a sx" style="left:155.5px;top:777.1px;height:12px;line-height:12px;color:#ccccdc;font-size:10.2px;transform:scaleX(0.925)">2024-06-18 14:51:08</div>
<div class="a sx" style="left:281.5px;top:777.1px;height:12px;line-height:12px;color:#ccccdc;font-size:10.2px;transform:scaleX(0.925)">GetCartAsync called with userId={userId}</div>
<div class="a" style="left:152px;top:792.8px;width:1390px;height:1px;background:rgba(204,204,220,0.08);"></div>
<div class="a sx" style="left:155.5px;top:799.7px;height:12px;line-height:12px;color:#ccccdc;font-size:10.2px;transform:scaleX(0.925)">2024-06-18 14:51:08</div>
<div class="a sx" style="left:281.5px;top:799.7px;height:12px;line-height:12px;color:#ccccdc;font-size:10.2px;transform:scaleX(0.925)">Receive ListRecommendations for product ids:['OLJCESPC7Z', 'LS4PSXUNUM', 'L9ECAV7KIM', '9SIQT8TOJO', '0PUK6V6EV0']</div>
<div class="a" style="left:152px;top:815.4px;width:1390px;height:1px;background:rgba(204,204,220,0.08);"></div>
<div class="a sx" style="left:155.5px;top:822.3px;height:12px;line-height:12px;color:#ccccdc;font-size:10.2px;transform:scaleX(0.925)">2024-06-18 14:51:08</div>
<div class="a sx" style="left:281.5px;top:822.3px;height:12px;line-height:12px;color:#ccccdc;font-size:10.2px;transform:scaleX(0.925)">Receive ListRecommendations for product ids:['0PUK6V6EV0', 'L9ECAV7KIM', '9SIQT8TOJO', '6E92ZMYYFZ', 'HQTGWGPNH4']</div>
<div class="a" style="left:152px;top:838.0px;width:1390px;height:1px;background:rgba(204,204,220,0.08);"></div>
<div class="a" style="left:276.5px;top:636px;width:1px;height:200px;background:rgba(204,204,220,0.1);"></div>
</body></html>
